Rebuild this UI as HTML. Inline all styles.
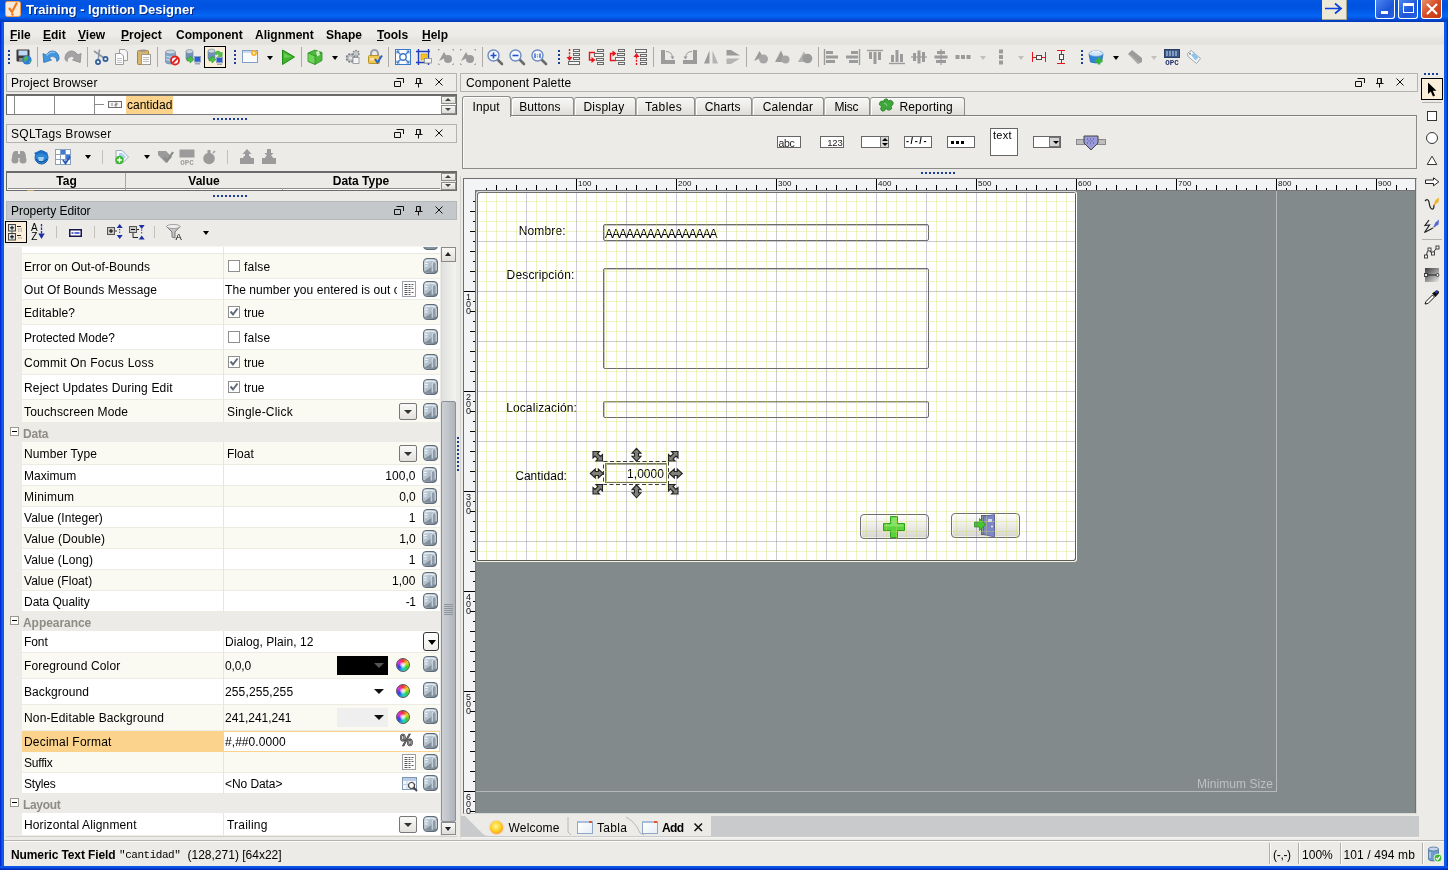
<!DOCTYPE html>
<html><head><meta charset="utf-8"><title>Training - Ignition Designer</title>
<style>
*{box-sizing:border-box;margin:0;padding:0}
html,body{width:1448px;height:870px;overflow:hidden}
body{position:relative;background:#ECEBE7;font-family:"Liberation Sans",sans-serif;font-size:12px;color:#000;line-height:1}
#w{position:absolute;left:0;top:0;width:1448px;height:870px;will-change:transform}
.a{position:absolute}
svg{position:absolute;overflow:visible}
.t{position:absolute;white-space:nowrap;line-height:14px;height:14px}
.b{font-weight:bold}
u{text-decoration:underline;text-underline-offset:1px}
#title{left:0;top:0;width:1448px;height:22px;background:linear-gradient(#0558E4 0,#0054E1 3px,#0054E2 9px,#035FEE 13px,#0566F4 16px,#0457E6 18px,#0245CE 20px,#0138B6 22px)}
#lb{left:0;top:22px;width:4px;height:848px;background:linear-gradient(90deg,#0019CF 0,#0A4FE2 40%,#0F64F0 75%,#0A52E2 100%)}
#rb{left:1444px;top:22px;width:4px;height:848px;background:linear-gradient(270deg,#0019CF 0,#0A4FE2 40%,#0F64F0 75%,#0A52E2 100%)}
#bb{left:0;top:866px;width:1448px;height:4px;background:linear-gradient(#0A55EA 0,#0A50E2 40%,#0433C8 75%,#001CB0 100%)}
#menu{left:4px;top:22px;width:1440px;height:23px;background:linear-gradient(#EFEEEA 0,#EDECE8 55%,#E3E1DB 90%,#E6E4DF 100%)}
.hdr{position:absolute;height:18px;border:1px solid #B4B3AF;background:#EEEDEA}
.hdr.act{background:#C4C8CB;border-color:#B5B8BB}
.sep{position:absolute;width:1px;background:#ADABA4;top:47px;height:20px}
.grip{position:absolute;width:2px;height:2px;background:#1C3D94;box-shadow:0 4px 0 #1C3D94,0 8px 0 #1C3D94,0 12px 0 #1C3D94}
.dd{position:absolute;width:0;height:0;border-left:3.5px solid transparent;border-right:3.5px solid transparent;border-top:4px solid #000;margin-left:0.5px}
.hdots{position:absolute;height:2px;width:34px;background:repeating-linear-gradient(90deg,#1C3D94 0,#1C3D94 2px,transparent 2px,transparent 4px)}
</style></head><body><div id="w">
<svg width="0" height="0" style="left:0;top:0"><defs><linearGradient id="dbg" x1="0" y1="0" x2="1" y2="0.800"><stop offset="0" stop-color="#D3DEE7"/><stop offset="0.450" stop-color="#B3C2CE"/><stop offset="0.700" stop-color="#94A3B0"/><stop offset="1" stop-color="#70808E"/></linearGradient></defs></svg>
<div class="a" id="title"></div>
<div class="a" id="lb"></div><div class="a" id="rb"></div><div class="a" id="bb"></div>
<div class="a" id="menu"></div>
<!-- title contents -->
<svg style="left:5px;top:1px" width="18" height="17" viewBox="0 0 18 17"><rect x="0.5" y="0.5" width="15" height="15" rx="2" fill="#FBE9D8" stroke="#F29A4E"/><path d="M4 7 L7 11 L12 1.5" fill="none" stroke="#F07A1E" stroke-width="2.2"/><circle cx="7.5" cy="13.5" r="1.2" fill="#F07A1E"/></svg>
<div class="t b" id="ttl" style="left:26px;top:2px;font-size:13px;line-height:16px;height:16px;color:#fff;text-shadow:1px 1px 0 #0A2A80">Training - Ignition Designer</div>
<div class="a" style="left:1322px;top:0;width:25px;height:20px;background:#ECE9D8;border-right:1px solid #A9A68F;border-bottom:1px solid #A9A68F"></div>
<svg style="left:1324px;top:2px" width="20" height="14" viewBox="0 0 20 14"><path d="M1 6.5 H17 M11 1.5 L17 6.5 L11 11.5" fill="none" stroke="#0A3FE0" stroke-width="1.700"/></svg>
<div class="a" style="left:1375px;top:0;width:20px;height:19px;border:1px solid #fff;border-top:0;border-radius:0 0 3px 3px;background:linear-gradient(135deg,#4C86F0,#1D55D8 60%,#2A62E0)"></div>
<div class="a" style="left:1381px;top:11px;width:7px;height:3px;background:#fff"></div>
<div class="a" style="left:1398px;top:0;width:20px;height:19px;border:1px solid #fff;border-top:0;border-radius:0 0 3px 3px;background:linear-gradient(135deg,#4C86F0,#1D55D8 60%,#2A62E0)"></div>
<div class="a" style="left:1403px;top:3px;width:11px;height:10px;border:1px solid #fff;border-top:3px solid #fff"></div>
<div class="a" style="left:1421px;top:0;width:21px;height:19px;border:1px solid #fff;border-top:0;border-radius:0 0 3px 3px;background:linear-gradient(135deg,#E8906E,#D64A22 50%,#C23A12)"></div>
<svg style="left:1425px;top:2px" width="14" height="14" viewBox="0 0 14 14"><path d="M2 2 L12 12 M12 2 L2 12" stroke="#fff" stroke-width="2.2"/></svg>
<!-- menu items -->
<div class="t b" style="left:10px;top:28px"><u>F</u>ile</div>
<div class="t b" style="left:43px;top:28px"><u>E</u>dit</div>
<div class="t b" style="left:78px;top:28px"><u>V</u>iew</div>
<div class="t b" style="left:121px;top:28px"><u>P</u>roject</div>
<div class="t b" style="left:176px;top:28px">Component</div>
<div class="t b" style="left:255px;top:28px">Alignment</div>
<div class="t b" style="left:326px;top:28px">Shape</div>
<div class="t b" style="left:377px;top:28px"><u>T</u>ools</div>
<div class="t b" style="left:422px;top:28px"><u>H</u>elp</div>
<!-- toolbar -->
<div class="grip" style="left:8px;top:50px"></div>
<svg style="left:16px;top:49px" width="16" height="16" viewBox="0 0 16 16"><rect x="0.5" y="0.5" width="13" height="12" rx="1" fill="#3B3B3D"/><rect x="2.5" y="1.5" width="9" height="5" fill="#BFD9F5"/><rect x="3" y="9" width="5" height="3.5" fill="#8A8A8A"/><circle cx="11" cy="11" r="4.6" fill="#2F7BD6"/><path d="M8 9 q2-3 4-1 q1 2-1 3 q-2 1-1 3 q-2-1-2-5z M13 12 q2-1 2 1 q-1 2-2 1z" fill="#4CB848"/></svg>
<div class="sep" style="left:37px"></div>
<svg style="left:43px;top:49px" width="16" height="16" viewBox="0 0 16 16"><path d="M0 4.500 L0.800 13.500 L8.500 11 L6 8.800 Q9.500 6 12.500 8.500 Q14 10 13.800 12.500 L16 10.500 Q16.500 5 12 2.500 Q7 0.500 3 6Z" fill="#3F95DE" stroke="#2A6FB4" stroke-width="0.800"/><path d="M3.500 6.500 Q7.500 2 12 3.500" stroke="#8CC4F0" stroke-width="1.200" fill="none"/></svg>
<svg style="left:64.5px;top:49px" width="16" height="16" viewBox="0 0 16 16"><path d="M16 4.500 L15.200 13.500 L7.500 11 L10 8.800 Q6.500 6 3.500 8.500 Q2 10 2.200 12.500 L0 10.500 Q-0.500 5 4 2.500 Q9 0.500 13 6Z" fill="#A4A4A4" stroke="#8C8C8C" stroke-width="0.800"/></svg>
<div class="sep" style="left:86.5px"></div>
<svg style="left:92.5px;top:49px" width="16" height="16" viewBox="0 0 16 16"><path d="M1 2 L11 9 M6.500 0.500 L5.200 11" stroke="#8C98A6" stroke-width="1.600" fill="none"/><circle cx="5" cy="13" r="2.100" fill="none" stroke="#2E5C9E" stroke-width="1.700"/><circle cx="12.500" cy="10" r="2.100" fill="none" stroke="#2E5C9E" stroke-width="1.700"/></svg>
<svg style="left:114px;top:49px" width="16" height="16" viewBox="0 0 16 16"><path d="M5.5 0.5 H11 L13.5 3 V11.5 H5.5Z" fill="#F7F7F7" stroke="#9C9C9C"/><path d="M1.5 4.5 H7 L9.5 7 V15.5 H1.5Z" fill="#FCFCFC" stroke="#9C9C9C"/><path d="M3 9.5H8M3 11.5H8M3 13.5H8" stroke="#C4C4C4"/></svg>
<svg style="left:135.5px;top:49px" width="16" height="16" viewBox="0 0 16 16"><rect x="1.5" y="1.5" width="11" height="14" rx="1" fill="#D8B56C" stroke="#A8843C"/><rect x="4.500" y="0.5" width="5" height="2.5" fill="#9A9A9A"/><rect x="5.5" y="5.5" width="9" height="10" fill="#FBFBFB" stroke="#9C9C9C"/><path d="M7 8.5H13M7 10.5H13M7 12.5H13" stroke="#BDBDBD"/></svg>
<div class="sep" style="left:157px"></div>
<svg style="left:164px;top:49px" width="16" height="16" viewBox="0 0 16 16"><path d="M1.5 3 v10 a5.0 2 0 0 0 10 0 v-10z" fill="#7FA6CF" stroke="#6E7F90" stroke-width="0.6"/><ellipse cx="6.5" cy="3" rx="5.0" ry="2" fill="#C9D6E2" stroke="#6E7F90" stroke-width="0.6"/><path d="M2 7 a5 2 0 0 0 9 0 M2 10 a5 2 0 0 0 9 0" stroke="#DDE8F2" fill="none"/><circle cx="11" cy="11.5" r="4" fill="#fff" stroke="#E0201A" stroke-width="1.8"/><path d="M8.5 14 L13.5 9" stroke="#E0201A" stroke-width="1.8"/></svg>
<svg style="left:185px;top:49px" width="16" height="16" viewBox="0 0 16 16"><path d="M1 2.5 v7 a3.5 2 0 0 0 7 0 v-7z" fill="#6D93BC" stroke="#6E7F90" stroke-width="0.6"/><ellipse cx="4.5" cy="2.5" rx="3.5" ry="2" fill="#C9D6E2" stroke="#6E7F90" stroke-width="0.6"/><path d="M2 9 v3 h3 v2 l4-3.5 l-4-3.5 v2z" fill="#4FC04A" stroke="#2E9A2E" stroke-width="0.6"/><rect x="9.5" y="7.5" width="6" height="5.5" fill="#2C5CD8" stroke="#8FA2C0"/><rect x="10" y="14" width="5" height="1.5" fill="#9AA6B6"/></svg>
<div class="a" style="left:204px;top:46px;width:22px;height:22px;background:#FBEFD9;border:1px solid #000"></div>
<svg style="left:207px;top:49px" width="16" height="16" viewBox="0 0 16 16"><path d="M1 2 v7 a3.5 2 0 0 0 7 0 v-7z" fill="#6D93BC" stroke="#6E7F90" stroke-width="0.6"/><ellipse cx="4.5" cy="2" rx="3.5" ry="2" fill="#C9D6E2" stroke="#6E7F90" stroke-width="0.6"/><path d="M8 4 q3-4 6 0 l1.200-1 v4.500 h-4.500 l1.500-1.500 q-1.500-2-3 0z" fill="#4FC04A" stroke="#2E9A2E" stroke-width="0.5"/><path d="M2 9 v3 h3 v2 l4-3.500 l-4-3.500 v2z" fill="#4FC04A" stroke="#2E9A2E" stroke-width="0.6"/><rect x="9.5" y="8.500" width="6" height="5" fill="#2C5CD8" stroke="#8FA2C0"/><rect x="10" y="14.500" width="5" height="1.500" fill="#9AA6B6"/></svg>
<div class="grip" style="left:234px;top:50px"></div>
<svg style="left:242px;top:49px" width="16" height="16" viewBox="0 0 16 16"><rect x="0.5" y="1.500" width="15" height="12" fill="#FAFBFD" stroke="#7F9DC6"/><rect x="1" y="2" width="14" height="2" fill="#C9DAF0"/><circle cx="12" cy="4" r="3" fill="#F9B233"/><circle cx="12" cy="4" r="1.200" fill="#FDE9A8"/></svg>
<div class="dd" style="left:266px;top:56px"></div>
<svg style="left:280px;top:49px" width="16" height="16" viewBox="0 0 16 16"><path d="M2.500 1 L14.500 8 L2.500 15.500Z" fill="#41B52C" stroke="#1F8A14" stroke-width="1" stroke-linejoin="round"/><path d="M4 4 L11 8 L4 9Z" fill="#7BD86A" opacity="0.7"/></svg>
<div class="sep" style="left:301px"></div>
<svg style="left:307px;top:49px" width="16" height="16" viewBox="0 0 16 16"><path d="M1 4 L8 1 L15 3.500 L15 11.500 L8 15.500 L1 12.500Z" fill="#4DBA3C" stroke="#2B8A22" stroke-width="0.8"/><path d="M1 4 L8 7 L15 3.500 M8 7 V15.500" stroke="#2B8A22" stroke-width="0.8" fill="none"/><path d="M1.500 4.500 L7.500 7.200 V14.500 L1.500 12Z" fill="#6FD45C"/><path d="M9 3 L12 1.500 L13 6 L10 7.500Z" fill="#C8F0BC"/></svg>
<div class="dd" style="left:331px;top:56px"></div>
<svg style="left:345px;top:49px" width="16" height="16" viewBox="0 0 16 16"><circle cx="5.500" cy="9" r="4" fill="#B9BDC2" stroke="#7C8085" stroke-width="1.600" stroke-dasharray="2 1.200"/><circle cx="5.500" cy="9" r="1.500" fill="#ECEBE7"/><circle cx="11" cy="4.500" r="3" fill="#C4C8CC" stroke="#7C8085" stroke-width="1.400" stroke-dasharray="1.600 1"/><rect x="8" y="8.500" width="6" height="6" fill="#F4F4F4" stroke="#8A8E94" stroke-width="0.8"/></svg>
<svg style="left:367px;top:49px" width="16" height="16" viewBox="0 0 16 16"><path d="M4 7 V4.500 a3.500 3.500 0 0 1 7 0 V7" fill="none" stroke="#9AA0A8" stroke-width="2"/><rect x="1.500" y="6.500" width="11" height="8" rx="1" fill="#F0C850" stroke="#B8922A"/><path d="M8 10 L10.500 13.500 L15 6.500" fill="none" stroke="#2C62D0" stroke-width="2"/><rect x="3" y="9" width="4" height="2.500" fill="#F8E6A8"/></svg>
<div class="sep" style="left:388px"></div>
<svg style="left:394.5px;top:49px" width="16" height="16" viewBox="0 0 16 16"><rect x="0.5" y="0.5" width="15" height="15" fill="#FDFDFE" stroke="#3C78C8"/><circle cx="8" cy="8" r="3.200" fill="none" stroke="#3C78C8" stroke-width="1.400"/><path d="M2 2 L5 5 M14 2 L11 5 M2 14 L5 11 M14 14 L11 11" stroke="#3C78C8" stroke-width="1.300"/><path d="M2 2h2.500M2 2v2.500M14 2h-2.500M14 2v2.500M2 14h2.500M2 14v-2.500M14 14h-2.500M14 14v-2.500" stroke="#3C78C8" stroke-width="1"/></svg>
<svg style="left:416px;top:49px" width="16" height="16" viewBox="0 0 16 16"><path d="M0 2.500 H14 M0 13.500 H14 M2.500 0 V16 M12.500 0 V16" stroke="#1F3FC0" stroke-width="1.400" fill="none"/><rect x="5" y="5" width="6" height="6" fill="#F5C21E" stroke="#C79A10" stroke-width="0.6"/><rect x="8.500" y="9.500" width="7" height="4.500" fill="#F2F2F2" stroke="#8A8A8A" stroke-width="0.8"/></svg>
<svg style="left:438px;top:49px" width="16" height="16" viewBox="0 0 16 16"><path d="M1 12 L6 3 L9 8z" fill="#9B9B9B"/><circle cx="10" cy="10" r="4" fill="#9B9B9B"/><path d="M0.500 0.500h2M0.500 0.500v2M15.500 0.500h-2M15.500 0.500v2M0.500 15.500h2M0.500 15.500v-2M15.500 15.500h-2M15.500 15.500v-2" stroke="#8A8A8A" stroke-width="1" stroke-dasharray="1 1"/></svg>
<svg style="left:460px;top:49px" width="16" height="16" viewBox="0 0 16 16"><path d="M1 12 L6 3 L9 8z" fill="#9B9B9B"/><circle cx="10" cy="10" r="4" fill="#9B9B9B"/><path d="M0.500 0.500h2M0.500 0.500v2M15.500 0.500h-2M15.500 0.500v2M0.500 15.500h2M0.500 15.500v-2M15.500 15.500h-2M15.500 15.500v-2" stroke="#8A8A8A" stroke-width="1" stroke-dasharray="1 1"/></svg>
<div class="sep" style="left:481.5px"></div>
<svg style="left:487px;top:49px" width="16" height="16" viewBox="0 0 16 16"><path d="M10 10 L15 15" stroke="#6A6A6A" stroke-width="2.600" stroke-linecap="round"/><circle cx="6.500" cy="6.500" r="5.500" fill="#F4F8FE" stroke="#6C8CC4" stroke-width="1.400"/><path d="M3.500 6.500H9.500M6.500 3.500V9.500" stroke="#2450C8" stroke-width="1.600"/></svg>
<svg style="left:508.5px;top:49px" width="16" height="16" viewBox="0 0 16 16"><path d="M10 10 L15 15" stroke="#6A6A6A" stroke-width="2.600" stroke-linecap="round"/><circle cx="6.500" cy="6.500" r="5.500" fill="#F4F8FE" stroke="#6C8CC4" stroke-width="1.400"/><path d="M3.500 6.500H9.500" stroke="#2450C8" stroke-width="1.600"/></svg>
<svg style="left:530.5px;top:49px" width="16" height="16" viewBox="0 0 16 16"><path d="M10 10 L15 15" stroke="#6A6A6A" stroke-width="2.600" stroke-linecap="round"/><circle cx="6.500" cy="6.500" r="5.500" fill="#F4F8FE" stroke="#6C8CC4" stroke-width="1.400"/><path d="M4 4.500V9M9 4.500V9M6.500 5.500v0.800M6.500 7.500v0.800" stroke="#2450C8" stroke-width="1.300"/></svg>
<div class="grip" style="left:558px;top:50px"></div>
<svg style="left:566px;top:49px" width="16" height="16" viewBox="0 0 16 16"><path d="M3.500 0 V9" stroke="#E8141C" stroke-width="1.400" stroke-dasharray="2 1.200"/><path d="M0.500 8 h6 l-3 4z" fill="#E8141C"/><rect x="7.5" y="0.5" width="6" height="2" fill="#F4F4F4" stroke="#6A6A6A" stroke-width="1"/><rect x="7.5" y="4.5" width="6" height="2" fill="#F4F4F4" stroke="#6A6A6A" stroke-width="1"/><rect x="7.5" y="8.5" width="6" height="2" fill="#F4F4F4" stroke="#6A6A6A" stroke-width="1"/><rect x="2.5" y="12.5" width="11" height="3" fill="#F4F4F4" stroke="#6A6A6A" stroke-width="1"/></svg>
<svg style="left:587.5px;top:49px" width="16" height="16" viewBox="0 0 16 16"><path d="M7 3.500 H1.500 V11 H4" stroke="#E8141C" stroke-width="1.400" fill="none"/><path d="M3.500 8 l4 3 l-4 3z" fill="#E8141C"/><rect x="9.5" y="0.5" width="6" height="2" fill="#F4F4F4" stroke="#6A6A6A" stroke-width="1"/><rect x="6.5" y="4.5" width="9" height="3" fill="#F4F4F4" stroke="#6A6A6A" stroke-width="1"/><rect x="8.5" y="9.5" width="7" height="2" fill="#F4F4F4" stroke="#6A6A6A" stroke-width="1"/><rect x="9.5" y="13.5" width="6" height="2" fill="#F4F4F4" stroke="#6A6A6A" stroke-width="1"/></svg>
<svg style="left:609px;top:49px" width="16" height="16" viewBox="0 0 16 16"><path d="M7 11.500 H1.500 V4.500 H4" stroke="#E8141C" stroke-width="1.400" fill="none"/><path d="M3.500 1.500 l4 3 l-4 3z" fill="#E8141C"/><rect x="9.5" y="0.5" width="6" height="2" fill="#F4F4F4" stroke="#6A6A6A" stroke-width="1"/><rect x="8.5" y="4.5" width="7" height="2" fill="#F4F4F4" stroke="#6A6A6A" stroke-width="1"/><rect x="6.5" y="8.5" width="9" height="3" fill="#F4F4F4" stroke="#6A6A6A" stroke-width="1"/><rect x="9.5" y="13.5" width="6" height="2" fill="#F4F4F4" stroke="#6A6A6A" stroke-width="1"/></svg>
<svg style="left:632.5px;top:49px" width="16" height="16" viewBox="0 0 16 16"><path d="M3.500 16 V7" stroke="#E8141C" stroke-width="1.400" stroke-dasharray="2 1.200"/><path d="M0.500 8 h6 l-3 -4z" fill="#E8141C"/><rect x="2.5" y="0.5" width="11" height="3" fill="#F4F4F4" stroke="#6A6A6A" stroke-width="1"/><rect x="7.5" y="5.5" width="6" height="2" fill="#F4F4F4" stroke="#6A6A6A" stroke-width="1"/><rect x="7.5" y="9.5" width="6" height="2" fill="#F4F4F4" stroke="#6A6A6A" stroke-width="1"/><rect x="7.5" y="13.5" width="6" height="2" fill="#F4F4F4" stroke="#6A6A6A" stroke-width="1"/></svg>
<div class="sep" style="left:653px"></div>
<svg style="left:659.5px;top:49px" width="16" height="16" viewBox="0 0 16 16"><path d="M1 1 h4 v10 h10 v4 h-14z" fill="#9B9B9B"/><path d="M6 2.500 q6 0 6.500 6" stroke="#9B9B9B" stroke-width="1" fill="none"/><path d="M10.500 7.500 l2 3 l2-3z" fill="#9B9B9B"/></svg>
<svg style="left:681.5px;top:49px" width="16" height="16" viewBox="0 0 16 16"><path d="M15 1 h-4 v10 h-10 v4 h14z" fill="#9B9B9B"/><path d="M10 2.500 q-6 0-6.500 6" stroke="#9B9B9B" stroke-width="1" fill="none"/><path d="M1.500 7.500 l2 3 l2-3z" fill="#9B9B9B"/></svg>
<svg style="left:703px;top:49px" width="16" height="16" viewBox="0 0 16 16"><path d="M6.500 1.500 V14.500 H1z" fill="#9B9B9B"/><path d="M9.500 1.500 V14.500 H15z" fill="#B4B4B4"/></svg>
<svg style="left:725px;top:49px" width="16" height="16" viewBox="0 0 16 16"><path d="M1.500 1 H6 L15 6.500 H1.500z" fill="#9B9B9B"/><path d="M1.500 9.500 H15 L6 15 H1.500z" fill="#B4B4B4"/></svg>
<div class="sep" style="left:746px"></div>
<svg style="left:752.5px;top:49px" width="16" height="16" viewBox="0 0 16 16"><path d="M1 12 L6.500 2 L10 8z" fill="#9B9B9B"/><circle cx="10.500" cy="10" r="4.500" fill="#A6A6A6"/></svg>
<svg style="left:774px;top:49px" width="16" height="16" viewBox="0 0 16 16"><path d="M1 13 L7 1.500 L12 13z" fill="#9B9B9B"/><circle cx="11.500" cy="10.500" r="4" fill="#A6A6A6"/></svg>
<svg style="left:796.5px;top:49px" width="16" height="16" viewBox="0 0 16 16"><path d="M1 13 L7 2.500 L12 13z" fill="#B0B0B0"/><circle cx="10.500" cy="9.500" r="4.800" fill="#9B9B9B"/></svg>
<div class="sep" style="left:817.5px"></div>
<svg style="left:823px;top:49px" width="16" height="16" viewBox="0 0 16 16"><path d="M1.500 0V16" stroke="#9B9B9B" stroke-width="1.400"/><rect x="3" y="2" width="7" height="3" fill="#9B9B9B"/><rect x="3" y="6.500" width="12" height="3" fill="#9B9B9B"/><rect x="3" y="11" width="9" height="3" fill="#9B9B9B"/></svg>
<svg style="left:845px;top:49px" width="16" height="16" viewBox="0 0 16 16"><path d="M14.500 0V16" stroke="#9B9B9B" stroke-width="1.400"/><rect x="6" y="2" width="7" height="3" fill="#9B9B9B"/><rect x="1" y="6.500" width="12" height="3" fill="#9B9B9B"/><rect x="4" y="11" width="9" height="3" fill="#9B9B9B"/></svg>
<svg style="left:867px;top:49px" width="16" height="16" viewBox="0 0 16 16"><path d="M0 1.500H16" stroke="#9B9B9B" stroke-width="1.400"/><rect x="2" y="3" width="3" height="7" fill="#9B9B9B"/><rect x="6.500" y="3" width="3" height="12" fill="#9B9B9B"/><rect x="11" y="3" width="3" height="8" fill="#9B9B9B"/></svg>
<svg style="left:889px;top:49px" width="16" height="16" viewBox="0 0 16 16"><path d="M0 14.500H16" stroke="#9B9B9B" stroke-width="1.400"/><rect x="2" y="6" width="3" height="7" fill="#9B9B9B"/><rect x="6.500" y="1" width="3" height="12" fill="#9B9B9B"/><rect x="11" y="5" width="3" height="8" fill="#9B9B9B"/></svg>
<svg style="left:910.5px;top:49px" width="16" height="16" viewBox="0 0 16 16"><path d="M0 8H16" stroke="#9B9B9B" stroke-width="1.200"/><rect x="2" y="4" width="3" height="8" fill="#9B9B9B"/><rect x="6.500" y="1.500" width="3" height="13" fill="#9B9B9B"/><rect x="11" y="3" width="3" height="10" fill="#9B9B9B"/></svg>
<svg style="left:932.5px;top:49px" width="16" height="16" viewBox="0 0 16 16"><path d="M8 0V16" stroke="#9B9B9B" stroke-width="1.200"/><rect x="4" y="2" width="8" height="3" fill="#9B9B9B"/><rect x="1.500" y="6.500" width="13" height="3" fill="#9B9B9B"/><rect x="3" y="11" width="10" height="3" fill="#9B9B9B"/></svg>
<svg style="left:955px;top:49px" width="16" height="16" viewBox="0 0 16 16"><rect x="0.500" y="6" width="4" height="4" fill="#9B9B9B"/><rect x="6" y="6" width="4" height="4" fill="#9B9B9B"/><rect x="11.500" y="6" width="4" height="4" fill="#9B9B9B"/></svg>
<div class="dd" style="left:979px;top:56px;border-top-color:#C2C0BA"></div>
<svg style="left:993px;top:49px" width="16" height="16" viewBox="0 0 16 16"><rect x="6" y="0.500" width="4" height="4" fill="#9B9B9B"/><rect x="6" y="6" width="4" height="4" fill="#9B9B9B"/><rect x="6" y="11.500" width="4" height="4" fill="#9B9B9B"/></svg>
<div class="dd" style="left:1017.5px;top:56px;border-top-color:#C2C0BA"></div>
<svg style="left:1031px;top:49px" width="16" height="16" viewBox="0 0 16 16"><path d="M1.500 3V13M14.500 3V13M1 8.500H15" stroke="#E8141C" stroke-width="1"/><rect x="5.500" y="6.500" width="5" height="4" fill="#F7F7F7" stroke="#4A4A4A"/></svg>
<svg style="left:1053px;top:49px" width="16" height="16" viewBox="0 0 16 16"><path d="M4 1.500H12M4 14.500H12M8.500 1V15" stroke="#E8141C" stroke-width="1"/><rect x="6.500" y="5.500" width="4" height="5" fill="#F7F7F7" stroke="#4A4A4A"/></svg>
<div class="grip" style="left:1081px;top:50px"></div>
<svg style="left:1088px;top:49px" width="16" height="16" viewBox="0 0 16 16"><path d="M1 5 h14 l-1.500 8 q-5.500 2-11 0z" fill="#2F86D8" stroke="#1E62A8" stroke-width="0.700"/><ellipse cx="8" cy="4.500" rx="7" ry="2.800" fill="#CFE4F6" stroke="#7FA8D0" stroke-width="0.700"/><path d="M4 3.500 l2-1.500 l2 1.500 l2-1.500 l2 1.500" stroke="#fff" fill="none"/><path d="M11 8.500v7M7.500 12h7" stroke="#3CB62E" stroke-width="2.600"/></svg>
<div class="dd" style="left:1112.5px;top:56px"></div>
<svg style="left:1126.5px;top:49px" width="16" height="16" viewBox="0 0 16 16"><path d="M1 5 L5 1 L15 9 L15 13 L11 15 Z" fill="#9B9B9B"/><path d="M3 6 L12 14" stroke="#B8B8B8"/></svg>
<div class="dd" style="left:1150px;top:56px;border-top-color:#C2C0BA"></div>
<svg style="left:1164px;top:49px" width="16" height="16" viewBox="0 0 16 16"><rect x="0.500" y="0.500" width="15" height="8" fill="#3C5A86" stroke="#27406A"/><path d="M3 2v5M6 2v5M9 2v5M12 2v5" stroke="#9FB6D6" stroke-width="1.400"/><text x="8" y="15.500" font-family="Liberation Mono,monospace" font-weight="bold" font-size="7.500" text-anchor="middle" fill="#1F2F6A">OPC</text></svg>
<svg style="left:1185.5px;top:49px" width="16" height="16" viewBox="0 0 16 16"><path d="M1.500 4.500 L5 1.500 L14.500 9.500 L10.500 14.500 L2 7.500Z" fill="#F6F8FA" stroke="#9AA4AE" stroke-width="1"/><path d="M5 6 L8 4 L12.500 8.500 L9.500 11.500Z" fill="#8CC4EC"/><circle cx="4" cy="4.800" r="1" fill="#8A8A8A"/></svg>
<div class="hdr" style="left:6px;top:73px;width:451px;height:19px"></div>
<div class="t" style="letter-spacing:0.120px;left:11px;top:76px">Project Browser</div>
<svg style="left:394px;top:78px" width="50" height="10" viewBox="0 0 50 10"><path d="M2.500 0.500 H9.500 V5 M0.500 3.500 H6.500 V8.500 H0.500Z M22.500 0.500 H26.500 V5.500 H22.500Z M26 0.500V5.500 M21 5.500 H28.500 M24.500 5.500 V9.500 M41.500 0.500 L48.500 7.500 M48.500 0.500 L41.500 7.500" fill="none" stroke="#111" stroke-width="1"/></svg>
<div class="a" style="left:6px;top:94px;width:451px;height:21px;background:#fff;border:1px solid #6A6A6A;border-top:2px solid #6A6A6A;border-bottom-color:#7A7A7A"></div>
<div class="a" style="left:14px;top:96px;width:1px;height:18px;background:#8A8A8A"></div>
<div class="a" style="left:54px;top:96px;width:1px;height:18px;background:#8A8A8A"></div>
<div class="a" style="left:94px;top:96px;width:1px;height:18px;background:#8A8A8A"></div>
<div class="a" style="left:94px;top:104px;width:10px;height:1px;background:#8A8A8A"></div>
<svg style="left:108px;top:101px" width="14" height="8" viewBox="0 0 14 8"><rect x="0.500" y="0.500" width="13" height="6" fill="#F4F4F4" stroke="#6E6E6E"/><path d="M4 2v3M7 2h2v1.500h-2v1.500h2" stroke="#6E6E6E" stroke-width="0.800" fill="none"/></svg>
<div class="a" style="left:126px;top:96px;width:47px;height:18px;background:#FBD38C"></div>
<div class="t" style="left:127px;top:98px">cantidad</div>
<div class="a" style="left:441px;top:96px;width:15px;height:8px;background:linear-gradient(#F4F4F2,#DEDDD9);border:1px solid #8E8E8C"></div>
<div class="dd" style="left:444.5px;top:98px;border-top:0;border-bottom:3.500px solid #444"></div>
<div class="a" style="left:441px;top:105px;width:15px;height:9px;background:linear-gradient(#F4F4F2,#DEDDD9);border:1px solid #8E8E8C"></div>
<div class="dd" style="left:444.5px;top:107.5px;border-top:3.500px solid #444"></div>
<div class="hdots" style="left:213px;top:118px"></div>
<div class="hdr" style="left:6px;top:124px;width:451px;height:19px"></div>
<div class="t" style="letter-spacing:0.319px;left:11px;top:127px">SQLTags Browser</div>
<svg style="left:394px;top:129px" width="50" height="10" viewBox="0 0 50 10"><path d="M2.500 0.500 H9.500 V5 M0.500 3.500 H6.500 V8.500 H0.500Z M22.500 0.500 H26.500 V5.500 H22.500Z M26 0.500V5.500 M21 5.500 H28.500 M24.500 5.500 V9.500 M41.500 0.500 L48.500 7.500 M48.500 0.500 L41.500 7.500" fill="none" stroke="#111" stroke-width="1"/></svg>
<svg style="left:11px;top:149px" width="16" height="16" viewBox="0 0 16 16"><path d="M1 9 Q1 3 4 2 H7 V9Z M15 9 Q15 3 12 2 H9 V9Z" fill="#9B9B9B"/><circle cx="4" cy="11" r="3.500" fill="#9B9B9B"/><circle cx="12" cy="11" r="3.500" fill="#9B9B9B"/><rect x="6" y="5" width="4" height="4" fill="#9B9B9B"/></svg>
<svg style="left:33px;top:149px" width="16" height="16" viewBox="0 0 16 16"><circle cx="8.500" cy="8.500" r="6.500" fill="#2E86D4" stroke="#1B5FA8"/><path d="M1 4 L8 1 L15 4 L13 6 L8 4 L3 6Z" fill="#1B6EC4"/><path d="M5 8 h6 l-1 4 h-4z" fill="#9FD0F4"/><path d="M3 10 q5 6 11 0" stroke="#0F4A8C" fill="none"/></svg>
<svg style="left:55px;top:149px" width="16" height="16" viewBox="0 0 16 16"><rect x="0.500" y="0.500" width="15" height="15" fill="#fff" stroke="#8AA0C0"/><path d="M5.500 0V16M10.500 0V16M0 5.500H16M0 10.500H16" stroke="#8AA0C0"/><rect x="6" y="1" width="4" height="4" fill="#3C7CD8"/><rect x="11" y="6" width="4" height="4" fill="#3C7CD8"/><path d="M8 11 l2.500 3.500 l4.500-7" stroke="#2458B8" stroke-width="1.800" fill="none"/></svg>
<div class="dd" style="left:84px;top:155px"></div>
<div class="a" style="left:102px;top:150px;width:1px;height:14px;background:#C2C0BA"></div>
<svg style="left:114px;top:149px" width="16" height="16" viewBox="0 0 16 16"><path d="M2 1.500 H8 L14.500 8 L8 14.500 H2Z" fill="#F8FAFC" stroke="#9AA8B8"/><path d="M5 4 H8 L12 8 L8 12 H5Z" fill="#A8D4F4"/><circle cx="5.500" cy="11" r="4.200" fill="#3CB62E"/><path d="M3 11h5M5.500 8.500v5" stroke="#fff" stroke-width="1.500"/></svg>
<div class="dd" style="left:143px;top:155px"></div>
<svg style="left:158px;top:149px" width="16" height="16" viewBox="0 0 16 16"><path d="M0 2 H8 L14 8 L8 14 L0 6Z" fill="#9B9B9B"/><path d="M6 8 l3 4 l6-9" stroke="#8A8A8A" stroke-width="2.200" fill="none"/></svg>
<svg style="left:179px;top:149px" width="16" height="16" viewBox="0 0 16 16"><rect x="0.500" y="0.500" width="15" height="8" fill="#9B9B9B"/><text x="8" y="15.500" font-family="Liberation Mono,monospace" font-weight="bold" font-size="7.500" text-anchor="middle" fill="#9B9B9B">OPC</text></svg>
<svg style="left:202px;top:149px" width="16" height="16" viewBox="0 0 16 16"><circle cx="7" cy="9.500" r="5.800" fill="#9B9B9B"/><rect x="5.500" y="1" width="3" height="3" fill="#9B9B9B"/><path d="M11 4 l2-2" stroke="#9B9B9B" stroke-width="1.600"/></svg>
<div class="a" style="left:227px;top:150px;width:1px;height:14px;background:#C2C0BA"></div>
<svg style="left:239px;top:149px" width="16" height="16" viewBox="0 0 16 16"><path d="M1 9 h3 l1-2 h6 l1 2 h3 v6 h-14z" fill="#9B9B9B"/><path d="M8 0 L12.500 5 H10 V9 H6 V5 H3.500Z" fill="#9B9B9B"/></svg>
<svg style="left:261px;top:149px" width="16" height="16" viewBox="0 0 16 16"><path d="M1 9 h3 l1-2 h6 l1 2 h3 v6 h-14z" fill="#9B9B9B"/><path d="M8 9 L12.500 4 H10 V0 H6 V4 H3.500Z" fill="#9B9B9B"/></svg>
<div class="a" style="left:6px;top:171px;width:451px;height:20px;background:#ECEBE7;border:1px solid #6A6A6A;border-top:2px solid #6A6A6A"></div>
<div class="a" style="left:8px;top:188px;width:432px;height:1px;background:#8C8C8A"></div>
<div class="a" style="left:8px;top:189px;width:432px;height:1px;background:#fff"></div>
<div class="a" style="left:125px;top:173px;width:1px;height:17px;background:#A8A7A3"></div>
<div class="a" style="left:282px;top:188px;width:1px;height:2px;background:#A8A7A3"></div>
<div class="t b" style="left:8px;top:174px;width:117px;text-align:center">Tag</div>
<div class="t b" style="left:126px;top:174px;width:156px;text-align:center">Value</div>
<div class="t b" style="left:283px;top:174px;width:156px;text-align:center">Data Type</div>
<div class="a" style="left:441px;top:173px;width:15px;height:8px;background:linear-gradient(#F4F4F2,#DEDDD9);border:1px solid #8E8E8C"></div>
<div class="dd" style="left:444.5px;top:175px;border-top:0;border-bottom:3.500px solid #444"></div>
<div class="a" style="left:441px;top:182px;width:15px;height:8px;background:linear-gradient(#F4F4F2,#DEDDD9);border:1px solid #8E8E8C"></div>
<div class="dd" style="left:444.5px;top:184px;border-top:3.500px solid #444"></div>
<div class="hdots" style="left:213px;top:195px"></div>
<div class="a" style="left:27px;top:190px;width:7px;height:1px;background:#C9A24E"></div>
<div class="hdr act" style="left:6px;top:201px;width:451px;height:19px"></div>
<div class="t" style="letter-spacing:-0.030px;left:11px;top:204px">Property Editor</div>
<svg style="left:394px;top:206px" width="50" height="10" viewBox="0 0 50 10"><path d="M2.500 0.500 H9.500 V5 M0.500 3.500 H6.500 V8.500 H0.500Z M22.500 0.500 H26.500 V5.500 H22.500Z M26 0.500V5.500 M21 5.500 H28.500 M24.500 5.500 V9.500 M41.500 0.500 L48.500 7.500 M48.500 0.500 L41.500 7.500" fill="none" stroke="#111" stroke-width="1"/></svg>
<div class="a" style="left:5px;top:221px;width:22px;height:22px;background:#FBEFD9;border:1px solid #000"></div>
<svg style="left:8px;top:224px" width="16" height="17" viewBox="0 0 16 17"><path d="M4 7V10" stroke="#555"/><rect x="0.500" y="0.500" width="7" height="6.500" fill="#E0E0E0" stroke="#444"/><path d="M2 3.800h4M4 1.800v4" stroke="#000"/><rect x="0.500" y="9.500" width="7" height="6.500" fill="#E0E0E0" stroke="#444"/><path d="M2 12.800h4M4 10.800v4" stroke="#000"/><path d="M9 2.500h4M9 11.500h4" stroke="#222" stroke-width="1.200"/><path d="M10 5h4M10 7h4M10 14h4" stroke="#8A8A8A" stroke-dasharray="1.500 1"/></svg>
<svg style="left:31px;top:223px" width="16" height="17" viewBox="0 0 16 17"><text x="0" y="8" font-size="10" font-family="Liberation Sans,sans-serif">A</text><text x="0.300" y="16.500" font-size="10" font-family="Liberation Sans,sans-serif">Z</text><path d="M10.500 1V11" stroke="#1C2FA8" stroke-width="1.300" stroke-dasharray="2.500 1"/><path d="M7.300 10.500 h6.400 l-3.200 5.500z" fill="#1C2FA8"/></svg>
<div class="a" style="left:56px;top:226px;width:1px;height:12px;background:#C2C0BA"></div>
<svg style="left:69px;top:229px" width="13" height="8" viewBox="0 0 13 8"><rect x="0.750" y="0.750" width="11.500" height="6.500" fill="#fff" stroke="#15154F" stroke-width="1.500"/><path d="M2.500 4h2M5.500 4h5" stroke="#2A3FC8" stroke-width="1.400"/></svg>
<div class="a" style="left:94px;top:226px;width:1px;height:12px;background:#C2C0BA"></div>
<svg style="left:107px;top:224px" width="16" height="16" viewBox="0 0 16 16"><rect x="0.500" y="3.500" width="7" height="7" fill="#C8C8C8" stroke="#555"/><path d="M2 7h4M4 5v4" stroke="#000"/><path d="M8 7h2" stroke="#333"/><path d="M9.700 4 h6 l-3-4z M9.700 11 h6 l-3 4z" fill="#1C2FA8"/><path d="M12.700 5v5" stroke="#1C2FA8" stroke-dasharray="1.300 1.300"/></svg>
<svg style="left:129px;top:224px" width="16" height="16" viewBox="0 0 16 16"><rect x="0.500" y="2.500" width="7" height="6" fill="#C8C8C8" stroke="#555"/><path d="M2 5.500h4" stroke="#000"/><path d="M4 9 V13.500 H9 M8 5.500h2" stroke="#222" fill="none"/><path d="M9.700 1 h6 l-3 4z M9.700 15.500 h6 l-3-4z" fill="#1C2FA8"/><path d="M12.700 5.500v5" stroke="#1C2FA8" stroke-dasharray="1.300 1.300"/></svg>
<div class="a" style="left:154px;top:226px;width:1px;height:12px;background:#C2C0BA"></div>
<svg style="left:166px;top:224px" width="17" height="16" viewBox="0 0 17 16"><path d="M0.500 2.500 L6 8 V13 L9 14 V8 L14 2.500Z" fill="#C4C4C4" stroke="#7A7A7A"/><ellipse cx="7.300" cy="2.500" rx="6.800" ry="2" fill="#F0F0F0" stroke="#8A8A8A" stroke-width="0.800"/><text x="9.500" y="15.500" font-size="9.500" font-family="Liberation Sans,sans-serif">A</text></svg>
<div class="dd" style="left:202px;top:231px"></div>
<div class="a" style="left:6px;top:246px;width:435px;height:590px;background:#ECEBE7;border-top:1px solid #F6F5F2"></div>
<div class="a" style="left:22px;top:247px;width:418px;height:7px;background:#fff;border-bottom:1px solid #E9E8E2"></div>
<div class="a" style="left:223px;top:247px;width:1px;height:7px;background:#E6E5E0"></div>
<div class="a" style="left:423px;top:247px;width:15px;height:3px;overflow:hidden"><svg style="left:0;top:-13px" width="15" height="16" viewBox="0 0 15 16"><rect x="0.500" y="0.500" width="14" height="15" rx="3.500" fill="#8492A0" stroke="#5F6B77"/></svg></div>
<div class="a" style="left:22px;top:254px;width:418px;height:25px;background:#FBFAF2;border-bottom:1px solid #ECEBE4"></div>
<div class="a" style="left:223px;top:254px;width:1px;height:25px;background:#E6E5E0"></div>
<div class="t" style="letter-spacing:0.058px;left:24px;top:260px">Error on Out-of-Bounds</div>
<div class="a" style="left:228px;top:260px;width:12px;height:12px;background:#fff;border:1px solid #8E8F8F"></div>
<div class="t" style="letter-spacing:0.188px;left:244px;top:260px">false</div>
<svg style="left:423px;top:258px" width="15" height="16" viewBox="0 0 15 16"><rect x="0.500" y="0.500" width="14" height="15" rx="3.500" fill="url(#dbg)" stroke="#5F6B77"/><path d="M1.200 13 L8 8.200 L9 8.200 V14.600 H3.500 Q1.200 14.600 1.200 13Z" fill="#7C8A97" opacity="0.850"/><path d="M2 12.800 L8.200 8.400" stroke="#C9D4DC" stroke-width="0.900" fill="none"/><path d="M2 3 Q7.500 1.200 13 3" stroke="#EDF2F6" stroke-width="1" fill="none"/><path d="M1.800 5.500h3M1.800 8h3" stroke="#F2F6F9" stroke-width="1"/><path d="M9.200 13.500 V6 q0-2.300 2-2.300 q2 0 2 2.300 V12.500" stroke="#DDE6ED" stroke-width="1" fill="#8E9CA9"/></svg>
<div class="a" style="left:22px;top:279px;width:418px;height:21px;background:#fff;border-bottom:1px solid #ECEBE4"></div>
<div class="a" style="left:223px;top:279px;width:1px;height:21px;background:#E6E5E0"></div>
<div class="t" style="letter-spacing:0.081px;left:24px;top:283px">Out Of Bounds Message</div>
<div class="t" style="letter-spacing:0.067px;left:225px;top:283px;width:172px;overflow:hidden">The number you entered is out o</div>
<svg style="left:402px;top:281px" width="14" height="16" viewBox="0 0 14 16"><rect x="0.500" y="0.500" width="13" height="15" fill="#FDFDFD" stroke="#9AA0A6"/><path d="M2.500 3.500h9M2.500 5.500h8M2.500 7.500h9M2.500 9.500h6M2.500 11.500h9M2.500 13.500h7" stroke="#5A5A5A" stroke-dasharray="3 1 2 1"/></svg>
<svg style="left:423px;top:281px" width="15" height="16" viewBox="0 0 15 16"><rect x="0.500" y="0.500" width="14" height="15" rx="3.500" fill="url(#dbg)" stroke="#5F6B77"/><path d="M1.200 13 L8 8.200 L9 8.200 V14.600 H3.500 Q1.200 14.600 1.200 13Z" fill="#7C8A97" opacity="0.850"/><path d="M2 12.800 L8.200 8.400" stroke="#C9D4DC" stroke-width="0.900" fill="none"/><path d="M2 3 Q7.500 1.200 13 3" stroke="#EDF2F6" stroke-width="1" fill="none"/><path d="M1.800 5.500h3M1.800 8h3" stroke="#F2F6F9" stroke-width="1"/><path d="M9.200 13.500 V6 q0-2.300 2-2.300 q2 0 2 2.300 V12.500" stroke="#DDE6ED" stroke-width="1" fill="#8E9CA9"/></svg>
<div class="a" style="left:22px;top:300px;width:418px;height:25px;background:#FBFAF2;border-bottom:1px solid #ECEBE4"></div>
<div class="a" style="left:223px;top:300px;width:1px;height:25px;background:#E6E5E0"></div>
<div class="t" style="letter-spacing:0.106px;left:24px;top:306px">Editable?</div>
<div class="a" style="left:228px;top:306px;width:12px;height:12px;background:#fff;border:1px solid #8E8F8F"></div>
<svg style="left:229px;top:307px" width="10" height="10" viewBox="0 0 10 10"><path d="M1.500 4.500 L4 7.500 L8.500 1.500" stroke="#5F6B78" stroke-width="2" fill="none"/></svg>
<div class="t" style="letter-spacing:-0.072px;left:244px;top:306px">true</div>
<svg style="left:423px;top:304px" width="15" height="16" viewBox="0 0 15 16"><rect x="0.500" y="0.500" width="14" height="15" rx="3.500" fill="url(#dbg)" stroke="#5F6B77"/><path d="M1.200 13 L8 8.200 L9 8.200 V14.600 H3.500 Q1.200 14.600 1.200 13Z" fill="#7C8A97" opacity="0.850"/><path d="M2 12.800 L8.200 8.400" stroke="#C9D4DC" stroke-width="0.900" fill="none"/><path d="M2 3 Q7.500 1.200 13 3" stroke="#EDF2F6" stroke-width="1" fill="none"/><path d="M1.800 5.500h3M1.800 8h3" stroke="#F2F6F9" stroke-width="1"/><path d="M9.200 13.500 V6 q0-2.300 2-2.300 q2 0 2 2.300 V12.500" stroke="#DDE6ED" stroke-width="1" fill="#8E9CA9"/></svg>
<div class="a" style="left:22px;top:325px;width:418px;height:25px;background:#fff;border-bottom:1px solid #ECEBE4"></div>
<div class="a" style="left:223px;top:325px;width:1px;height:25px;background:#E6E5E0"></div>
<div class="t" style="letter-spacing:-0.033px;left:24px;top:331px">Protected Mode?</div>
<div class="a" style="left:228px;top:331px;width:12px;height:12px;background:#fff;border:1px solid #8E8F8F"></div>
<div class="t" style="letter-spacing:0.188px;left:244px;top:331px">false</div>
<svg style="left:423px;top:329px" width="15" height="16" viewBox="0 0 15 16"><rect x="0.500" y="0.500" width="14" height="15" rx="3.500" fill="url(#dbg)" stroke="#5F6B77"/><path d="M1.200 13 L8 8.200 L9 8.200 V14.600 H3.500 Q1.200 14.600 1.200 13Z" fill="#7C8A97" opacity="0.850"/><path d="M2 12.800 L8.200 8.400" stroke="#C9D4DC" stroke-width="0.900" fill="none"/><path d="M2 3 Q7.500 1.200 13 3" stroke="#EDF2F6" stroke-width="1" fill="none"/><path d="M1.800 5.500h3M1.800 8h3" stroke="#F2F6F9" stroke-width="1"/><path d="M9.200 13.500 V6 q0-2.300 2-2.300 q2 0 2 2.300 V12.500" stroke="#DDE6ED" stroke-width="1" fill="#8E9CA9"/></svg>
<div class="a" style="left:22px;top:350px;width:418px;height:25px;background:#FBFAF2;border-bottom:1px solid #ECEBE4"></div>
<div class="a" style="left:223px;top:350px;width:1px;height:25px;background:#E6E5E0"></div>
<div class="t" style="letter-spacing:0.226px;left:24px;top:356px">Commit On Focus Loss</div>
<div class="a" style="left:228px;top:356px;width:12px;height:12px;background:#fff;border:1px solid #8E8F8F"></div>
<svg style="left:229px;top:357px" width="10" height="10" viewBox="0 0 10 10"><path d="M1.500 4.500 L4 7.500 L8.500 1.500" stroke="#5F6B78" stroke-width="2" fill="none"/></svg>
<div class="t" style="letter-spacing:-0.072px;left:244px;top:356px">true</div>
<svg style="left:423px;top:354px" width="15" height="16" viewBox="0 0 15 16"><rect x="0.500" y="0.500" width="14" height="15" rx="3.500" fill="url(#dbg)" stroke="#5F6B77"/><path d="M1.200 13 L8 8.200 L9 8.200 V14.600 H3.500 Q1.200 14.600 1.200 13Z" fill="#7C8A97" opacity="0.850"/><path d="M2 12.800 L8.200 8.400" stroke="#C9D4DC" stroke-width="0.900" fill="none"/><path d="M2 3 Q7.500 1.200 13 3" stroke="#EDF2F6" stroke-width="1" fill="none"/><path d="M1.800 5.500h3M1.800 8h3" stroke="#F2F6F9" stroke-width="1"/><path d="M9.200 13.500 V6 q0-2.300 2-2.300 q2 0 2 2.300 V12.500" stroke="#DDE6ED" stroke-width="1" fill="#8E9CA9"/></svg>
<div class="a" style="left:22px;top:375px;width:418px;height:25px;background:#fff;border-bottom:1px solid #ECEBE4"></div>
<div class="a" style="left:223px;top:375px;width:1px;height:25px;background:#E6E5E0"></div>
<div class="t" style="letter-spacing:0.152px;left:24px;top:381px">Reject Updates During Edit</div>
<div class="a" style="left:228px;top:381px;width:12px;height:12px;background:#fff;border:1px solid #8E8F8F"></div>
<svg style="left:229px;top:382px" width="10" height="10" viewBox="0 0 10 10"><path d="M1.500 4.500 L4 7.500 L8.500 1.500" stroke="#5F6B78" stroke-width="2" fill="none"/></svg>
<div class="t" style="letter-spacing:-0.072px;left:244px;top:381px">true</div>
<svg style="left:423px;top:379px" width="15" height="16" viewBox="0 0 15 16"><rect x="0.500" y="0.500" width="14" height="15" rx="3.500" fill="url(#dbg)" stroke="#5F6B77"/><path d="M1.200 13 L8 8.200 L9 8.200 V14.600 H3.500 Q1.200 14.600 1.200 13Z" fill="#7C8A97" opacity="0.850"/><path d="M2 12.800 L8.200 8.400" stroke="#C9D4DC" stroke-width="0.900" fill="none"/><path d="M2 3 Q7.500 1.200 13 3" stroke="#EDF2F6" stroke-width="1" fill="none"/><path d="M1.800 5.500h3M1.800 8h3" stroke="#F2F6F9" stroke-width="1"/><path d="M9.200 13.500 V6 q0-2.300 2-2.300 q2 0 2 2.300 V12.500" stroke="#DDE6ED" stroke-width="1" fill="#8E9CA9"/></svg>
<div class="a" style="left:22px;top:400px;width:418px;height:23px;background:#FBFAF2;border-bottom:1px solid #ECEBE4"></div>
<div class="a" style="left:223px;top:400px;width:1px;height:23px;background:#E6E5E0"></div>
<div class="t" style="letter-spacing:0.176px;left:24px;top:405px">Touchscreen Mode</div>
<div class="t" style="letter-spacing:0.212px;left:227px;top:405px">Single-Click</div>
<div class="a" style="left:399px;top:403px;width:18px;height:17px;background:linear-gradient(#FAFAF9,#E2E1DD);border:1px solid #777;border-radius:2px"></div>
<div class="dd" style="left:403px;top:410px;border-width:4px 4px 0 4px;border-top-color:#333"></div>
<svg style="left:423px;top:403px" width="15" height="16" viewBox="0 0 15 16"><rect x="0.500" y="0.500" width="14" height="15" rx="3.500" fill="url(#dbg)" stroke="#5F6B77"/><path d="M1.200 13 L8 8.200 L9 8.200 V14.600 H3.500 Q1.200 14.600 1.200 13Z" fill="#7C8A97" opacity="0.850"/><path d="M2 12.800 L8.200 8.400" stroke="#C9D4DC" stroke-width="0.900" fill="none"/><path d="M2 3 Q7.500 1.200 13 3" stroke="#EDF2F6" stroke-width="1" fill="none"/><path d="M1.800 5.500h3M1.800 8h3" stroke="#F2F6F9" stroke-width="1"/><path d="M9.200 13.500 V6 q0-2.300 2-2.300 q2 0 2 2.300 V12.500" stroke="#DDE6ED" stroke-width="1" fill="#8E9CA9"/></svg>
<div class="a" style="left:10px;top:427px;width:9px;height:9px;border:1px solid #9C9A8E;background:#fff"></div>
<div class="a" style="left:12px;top:431px;width:5px;height:1px;background:#000"></div>
<div class="t b" style="letter-spacing:-0.179px;left:23px;top:427px;color:#8E8C84">Data</div>
<div class="a" style="left:22px;top:442px;width:418px;height:23px;background:#FBFAF2;border-bottom:1px solid #ECEBE4"></div>
<div class="a" style="left:223px;top:442px;width:1px;height:23px;background:#E6E5E0"></div>
<div class="t" style="letter-spacing:0.108px;left:24px;top:447px">Number Type</div>
<div class="t" style="letter-spacing:0.042px;left:227px;top:447px">Float</div>
<div class="a" style="left:399px;top:445px;width:18px;height:17px;background:linear-gradient(#FAFAF9,#E2E1DD);border:1px solid #777;border-radius:2px"></div>
<div class="dd" style="left:403px;top:452px;border-width:4px 4px 0 4px;border-top-color:#333"></div>
<svg style="left:423px;top:445px" width="15" height="16" viewBox="0 0 15 16"><rect x="0.500" y="0.500" width="14" height="15" rx="3.500" fill="url(#dbg)" stroke="#5F6B77"/><path d="M1.200 13 L8 8.200 L9 8.200 V14.600 H3.500 Q1.200 14.600 1.200 13Z" fill="#7C8A97" opacity="0.850"/><path d="M2 12.800 L8.200 8.400" stroke="#C9D4DC" stroke-width="0.900" fill="none"/><path d="M2 3 Q7.500 1.200 13 3" stroke="#EDF2F6" stroke-width="1" fill="none"/><path d="M1.800 5.500h3M1.800 8h3" stroke="#F2F6F9" stroke-width="1"/><path d="M9.200 13.500 V6 q0-2.300 2-2.300 q2 0 2 2.300 V12.500" stroke="#DDE6ED" stroke-width="1" fill="#8E9CA9"/></svg>
<div class="a" style="left:22px;top:465px;width:418px;height:21px;background:#fff;border-bottom:1px solid #ECEBE4"></div>
<div class="a" style="left:223px;top:465px;width:1px;height:21px;background:#E6E5E0"></div>
<div class="t" style="letter-spacing:0.041px;left:24px;top:469px">Maximum</div>
<div class="t" style="letter-spacing:0.034px;left:300px;top:469px;width:115.500px;text-align:right">100,0</div>
<svg style="left:422px;top:467px" width="15" height="16" viewBox="0 0 15 16"><rect x="0.500" y="0.500" width="14" height="15" rx="3.500" fill="url(#dbg)" stroke="#5F6B77"/><path d="M1.200 13 L8 8.200 L9 8.200 V14.600 H3.500 Q1.200 14.600 1.200 13Z" fill="#7C8A97" opacity="0.850"/><path d="M2 12.800 L8.200 8.400" stroke="#C9D4DC" stroke-width="0.900" fill="none"/><path d="M2 3 Q7.500 1.200 13 3" stroke="#EDF2F6" stroke-width="1" fill="none"/><path d="M1.800 5.500h3M1.800 8h3" stroke="#F2F6F9" stroke-width="1"/><path d="M9.200 13.500 V6 q0-2.300 2-2.300 q2 0 2 2.300 V12.500" stroke="#DDE6ED" stroke-width="1" fill="#8E9CA9"/></svg>
<div class="a" style="left:22px;top:486px;width:418px;height:21px;background:#FBFAF2;border-bottom:1px solid #ECEBE4"></div>
<div class="a" style="left:223px;top:486px;width:1px;height:21px;background:#E6E5E0"></div>
<div class="t" style="letter-spacing:0.233px;left:24px;top:490px">Minimum</div>
<div class="t" style="letter-spacing:-0.163px;left:300px;top:490px;width:115.500px;text-align:right">0,0</div>
<svg style="left:422px;top:488px" width="15" height="16" viewBox="0 0 15 16"><rect x="0.500" y="0.500" width="14" height="15" rx="3.500" fill="url(#dbg)" stroke="#5F6B77"/><path d="M1.200 13 L8 8.200 L9 8.200 V14.600 H3.500 Q1.200 14.600 1.200 13Z" fill="#7C8A97" opacity="0.850"/><path d="M2 12.800 L8.200 8.400" stroke="#C9D4DC" stroke-width="0.900" fill="none"/><path d="M2 3 Q7.500 1.200 13 3" stroke="#EDF2F6" stroke-width="1" fill="none"/><path d="M1.800 5.500h3M1.800 8h3" stroke="#F2F6F9" stroke-width="1"/><path d="M9.200 13.500 V6 q0-2.300 2-2.300 q2 0 2 2.300 V12.500" stroke="#DDE6ED" stroke-width="1" fill="#8E9CA9"/></svg>
<div class="a" style="left:22px;top:507px;width:418px;height:21px;background:#fff;border-bottom:1px solid #ECEBE4"></div>
<div class="a" style="left:223px;top:507px;width:1px;height:21px;background:#E6E5E0"></div>
<div class="t" style="letter-spacing:0.027px;left:24px;top:511px">Value (Integer)</div>
<div class="t" style="left:300px;top:511px;width:115.500px;text-align:right">1</div>
<svg style="left:423px;top:509px" width="15" height="16" viewBox="0 0 15 16"><rect x="0.500" y="0.500" width="14" height="15" rx="3.500" fill="url(#dbg)" stroke="#5F6B77"/><path d="M1.200 13 L8 8.200 L9 8.200 V14.600 H3.500 Q1.200 14.600 1.200 13Z" fill="#7C8A97" opacity="0.850"/><path d="M2 12.800 L8.200 8.400" stroke="#C9D4DC" stroke-width="0.900" fill="none"/><path d="M2 3 Q7.500 1.200 13 3" stroke="#EDF2F6" stroke-width="1" fill="none"/><path d="M1.800 5.500h3M1.800 8h3" stroke="#F2F6F9" stroke-width="1"/><path d="M9.200 13.500 V6 q0-2.300 2-2.300 q2 0 2 2.300 V12.500" stroke="#DDE6ED" stroke-width="1" fill="#8E9CA9"/></svg>
<div class="a" style="left:22px;top:528px;width:418px;height:21px;background:#FBFAF2;border-bottom:1px solid #ECEBE4"></div>
<div class="a" style="left:223px;top:528px;width:1px;height:21px;background:#E6E5E0"></div>
<div class="t" style="letter-spacing:0.146px;left:24px;top:532px">Value (Double)</div>
<div class="t" style="letter-spacing:-0.163px;left:300px;top:532px;width:115.500px;text-align:right">1,0</div>
<svg style="left:422px;top:530px" width="15" height="16" viewBox="0 0 15 16"><rect x="0.500" y="0.500" width="14" height="15" rx="3.500" fill="url(#dbg)" stroke="#5F6B77"/><path d="M1.200 13 L8 8.200 L9 8.200 V14.600 H3.500 Q1.200 14.600 1.200 13Z" fill="#7C8A97" opacity="0.850"/><path d="M2 12.800 L8.200 8.400" stroke="#C9D4DC" stroke-width="0.900" fill="none"/><path d="M2 3 Q7.500 1.200 13 3" stroke="#EDF2F6" stroke-width="1" fill="none"/><path d="M1.800 5.500h3M1.800 8h3" stroke="#F2F6F9" stroke-width="1"/><path d="M9.200 13.500 V6 q0-2.300 2-2.300 q2 0 2 2.300 V12.500" stroke="#DDE6ED" stroke-width="1" fill="#8E9CA9"/></svg>
<div class="a" style="left:22px;top:549px;width:418px;height:21px;background:#fff;border-bottom:1px solid #ECEBE4"></div>
<div class="a" style="left:223px;top:549px;width:1px;height:21px;background:#E6E5E0"></div>
<div class="t" style="letter-spacing:0.114px;left:24px;top:553px">Value (Long)</div>
<div class="t" style="left:300px;top:553px;width:115.500px;text-align:right">1</div>
<svg style="left:422px;top:551px" width="15" height="16" viewBox="0 0 15 16"><rect x="0.500" y="0.500" width="14" height="15" rx="3.500" fill="url(#dbg)" stroke="#5F6B77"/><path d="M1.200 13 L8 8.200 L9 8.200 V14.600 H3.500 Q1.200 14.600 1.200 13Z" fill="#7C8A97" opacity="0.850"/><path d="M2 12.800 L8.200 8.400" stroke="#C9D4DC" stroke-width="0.900" fill="none"/><path d="M2 3 Q7.500 1.200 13 3" stroke="#EDF2F6" stroke-width="1" fill="none"/><path d="M1.800 5.500h3M1.800 8h3" stroke="#F2F6F9" stroke-width="1"/><path d="M9.200 13.500 V6 q0-2.300 2-2.300 q2 0 2 2.300 V12.500" stroke="#DDE6ED" stroke-width="1" fill="#8E9CA9"/></svg>
<div class="a" style="left:22px;top:570px;width:418px;height:21px;background:#FBFAF2;border-bottom:1px solid #ECEBE4"></div>
<div class="a" style="left:223px;top:570px;width:1px;height:21px;background:#E6E5E0"></div>
<div class="t" style="letter-spacing:0.030px;left:24px;top:574px">Value (Float)</div>
<div class="t" style="letter-spacing:0.010px;left:300px;top:574px;width:115.500px;text-align:right">1,00</div>
<svg style="left:422px;top:572px" width="15" height="16" viewBox="0 0 15 16"><rect x="0.500" y="0.500" width="14" height="15" rx="3.500" fill="url(#dbg)" stroke="#5F6B77"/><path d="M1.200 13 L8 8.200 L9 8.200 V14.600 H3.500 Q1.200 14.600 1.200 13Z" fill="#7C8A97" opacity="0.850"/><path d="M2 12.800 L8.200 8.400" stroke="#C9D4DC" stroke-width="0.900" fill="none"/><path d="M2 3 Q7.500 1.200 13 3" stroke="#EDF2F6" stroke-width="1" fill="none"/><path d="M1.800 5.500h3M1.800 8h3" stroke="#F2F6F9" stroke-width="1"/><path d="M9.200 13.500 V6 q0-2.300 2-2.300 q2 0 2 2.300 V12.500" stroke="#DDE6ED" stroke-width="1" fill="#8E9CA9"/></svg>
<div class="a" style="left:22px;top:591px;width:418px;height:21px;background:#fff;border-bottom:1px solid #ECEBE4"></div>
<div class="a" style="left:223px;top:591px;width:1px;height:21px;background:#E6E5E0"></div>
<div class="t" style="letter-spacing:-0.036px;left:24px;top:595px">Data Quality</div>
<div class="t" style="letter-spacing:-0.486px;left:300px;top:595px;width:115.500px;text-align:right">-1</div>
<svg style="left:423px;top:593px" width="15" height="16" viewBox="0 0 15 16"><rect x="0.500" y="0.500" width="14" height="15" rx="3.500" fill="url(#dbg)" stroke="#5F6B77"/><path d="M1.200 13 L8 8.200 L9 8.200 V14.600 H3.500 Q1.200 14.600 1.200 13Z" fill="#7C8A97" opacity="0.850"/><path d="M2 12.800 L8.200 8.400" stroke="#C9D4DC" stroke-width="0.900" fill="none"/><path d="M2 3 Q7.500 1.200 13 3" stroke="#EDF2F6" stroke-width="1" fill="none"/><path d="M1.800 5.500h3M1.800 8h3" stroke="#F2F6F9" stroke-width="1"/><path d="M9.200 13.500 V6 q0-2.300 2-2.300 q2 0 2 2.300 V12.500" stroke="#DDE6ED" stroke-width="1" fill="#8E9CA9"/></svg>
<div class="a" style="left:10px;top:616px;width:9px;height:9px;border:1px solid #9C9A8E;background:#fff"></div>
<div class="a" style="left:12px;top:620px;width:5px;height:1px;background:#000"></div>
<div class="t b" style="letter-spacing:-0.050px;left:23px;top:616px;color:#8E8C84">Appearance</div>
<div class="a" style="left:22px;top:631px;width:418px;height:22px;background:#fff;border-bottom:1px solid #ECEBE4"></div>
<div class="a" style="left:223px;top:631px;width:1px;height:22px;background:#E6E5E0"></div>
<div class="t" style="letter-spacing:-0.079px;left:24px;top:635px">Font</div>
<div class="t" style="letter-spacing:0.071px;left:225px;top:635px">Dialog, Plain, 12</div>
<div class="a" style="left:423px;top:632px;width:16px;height:19px;background:linear-gradient(#fff,#EEEDEA);border:1px solid #333;border-radius:3px"></div>
<div class="dd" style="left:427px;top:640px;border-left-width:4.500px;border-right-width:4.500px;border-top-width:5px"></div>
<div class="a" style="left:22px;top:653px;width:418px;height:26px;background:#FBFAF2;border-bottom:1px solid #ECEBE4"></div>
<div class="a" style="left:223px;top:653px;width:1px;height:26px;background:#E6E5E0"></div>
<div class="t" style="letter-spacing:0.146px;left:24px;top:659px">Foreground Color</div>
<div class="t" style="letter-spacing:-0.141px;left:225px;top:659px">0,0,0</div>
<div class="a" style="left:337px;top:656px;width:51px;height:19px;background:#000"></div>
<div class="dd" style="left:373px;top:663px;border-left-width:5px;border-right-width:5px;border-top:5px solid #555"></div>
<div class="a" style="left:396px;top:658px;width:14px;height:14px;border-radius:50%;background:conic-gradient(#F03030,#F0D020,#30D030,#20D0D0,#3040F0,#E030E0,#F03030);border:1px solid #555"></div>
<div class="a" style="left:400px;top:662px;width:6px;height:6px;border-radius:50%;background:radial-gradient(#fff,rgba(255,255,255,0))"></div>
<svg style="left:423px;top:656px" width="15" height="16" viewBox="0 0 15 16"><rect x="0.500" y="0.500" width="14" height="15" rx="3.500" fill="url(#dbg)" stroke="#5F6B77"/><path d="M1.200 13 L8 8.200 L9 8.200 V14.600 H3.500 Q1.200 14.600 1.200 13Z" fill="#7C8A97" opacity="0.850"/><path d="M2 12.800 L8.200 8.400" stroke="#C9D4DC" stroke-width="0.900" fill="none"/><path d="M2 3 Q7.500 1.200 13 3" stroke="#EDF2F6" stroke-width="1" fill="none"/><path d="M1.800 5.500h3M1.800 8h3" stroke="#F2F6F9" stroke-width="1"/><path d="M9.200 13.500 V6 q0-2.300 2-2.300 q2 0 2 2.300 V12.500" stroke="#DDE6ED" stroke-width="1" fill="#8E9CA9"/></svg>
<div class="a" style="left:22px;top:679px;width:418px;height:26px;background:#fff;border-bottom:1px solid #ECEBE4"></div>
<div class="a" style="left:223px;top:679px;width:1px;height:26px;background:#E6E5E0"></div>
<div class="t" style="letter-spacing:0.095px;left:24px;top:685px">Background</div>
<div class="t" style="letter-spacing:0.133px;left:225px;top:685px">255,255,255</div>
<div class="a" style="left:337px;top:682px;width:51px;height:19px;background:#fff"></div>
<div class="dd" style="left:373px;top:689px;border-left-width:5px;border-right-width:5px;border-top:5px solid #111"></div>
<div class="a" style="left:396px;top:684px;width:14px;height:14px;border-radius:50%;background:conic-gradient(#F03030,#F0D020,#30D030,#20D0D0,#3040F0,#E030E0,#F03030);border:1px solid #555"></div>
<div class="a" style="left:400px;top:688px;width:6px;height:6px;border-radius:50%;background:radial-gradient(#fff,rgba(255,255,255,0))"></div>
<svg style="left:423px;top:682px" width="15" height="16" viewBox="0 0 15 16"><rect x="0.500" y="0.500" width="14" height="15" rx="3.500" fill="url(#dbg)" stroke="#5F6B77"/><path d="M1.200 13 L8 8.200 L9 8.200 V14.600 H3.500 Q1.200 14.600 1.200 13Z" fill="#7C8A97" opacity="0.850"/><path d="M2 12.800 L8.200 8.400" stroke="#C9D4DC" stroke-width="0.900" fill="none"/><path d="M2 3 Q7.500 1.200 13 3" stroke="#EDF2F6" stroke-width="1" fill="none"/><path d="M1.800 5.500h3M1.800 8h3" stroke="#F2F6F9" stroke-width="1"/><path d="M9.200 13.500 V6 q0-2.300 2-2.300 q2 0 2 2.300 V12.500" stroke="#DDE6ED" stroke-width="1" fill="#8E9CA9"/></svg>
<div class="a" style="left:22px;top:705px;width:418px;height:26px;background:#FBFAF2;border-bottom:1px solid #ECEBE4"></div>
<div class="a" style="left:223px;top:705px;width:1px;height:26px;background:#E6E5E0"></div>
<div class="t" style="letter-spacing:0.149px;left:24px;top:711px">Non-Editable Background</div>
<div class="t" style="letter-spacing:-0.021px;left:225px;top:711px">241,241,241</div>
<div class="a" style="left:337px;top:708px;width:51px;height:19px;background:#EFEFEF"></div>
<div class="dd" style="left:373px;top:715px;border-left-width:5px;border-right-width:5px;border-top:5px solid #111"></div>
<div class="a" style="left:396px;top:710px;width:14px;height:14px;border-radius:50%;background:conic-gradient(#F03030,#F0D020,#30D030,#20D0D0,#3040F0,#E030E0,#F03030);border:1px solid #555"></div>
<div class="a" style="left:400px;top:714px;width:6px;height:6px;border-radius:50%;background:radial-gradient(#fff,rgba(255,255,255,0))"></div>
<svg style="left:423px;top:708px" width="15" height="16" viewBox="0 0 15 16"><rect x="0.500" y="0.500" width="14" height="15" rx="3.500" fill="url(#dbg)" stroke="#5F6B77"/><path d="M1.200 13 L8 8.200 L9 8.200 V14.600 H3.500 Q1.200 14.600 1.200 13Z" fill="#7C8A97" opacity="0.850"/><path d="M2 12.800 L8.200 8.400" stroke="#C9D4DC" stroke-width="0.900" fill="none"/><path d="M2 3 Q7.500 1.200 13 3" stroke="#EDF2F6" stroke-width="1" fill="none"/><path d="M1.800 5.500h3M1.800 8h3" stroke="#F2F6F9" stroke-width="1"/><path d="M9.200 13.500 V6 q0-2.300 2-2.300 q2 0 2 2.300 V12.500" stroke="#DDE6ED" stroke-width="1" fill="#8E9CA9"/></svg>
<div class="a" style="left:22px;top:731px;width:418px;height:21px;background:#fff;border-bottom:1px solid #ECEBE4"></div>
<div class="a" style="left:223px;top:731px;width:1px;height:21px;background:#E6E5E0"></div>
<div class="a" style="left:22px;top:731px;width:201px;height:21px;background:#FBD38C"></div>
<div class="a" style="left:223px;top:731px;width:217px;height:21px;background:#fff;border:1px solid #FBD38C"></div>
<div class="t" style="letter-spacing:0.208px;left:24px;top:735px">Decimal Format</div>
<div class="t" style="letter-spacing:0.064px;left:225px;top:735px">#,##0.0000</div>
<div class="t b" style="left:399.500px;top:733px;font-size:16px;line-height:16px;height:16px;color:#9A9A9A;-webkit-text-stroke:0.700px #2A2A2A;transform:scaleX(0.900);transform-origin:0 0">%</div>
<svg style="left:423px;top:733px" width="15" height="16" viewBox="0 0 15 16"><rect x="0.500" y="0.500" width="14" height="15" rx="3.500" fill="url(#dbg)" stroke="#5F6B77"/><path d="M1.200 13 L8 8.200 L9 8.200 V14.600 H3.500 Q1.200 14.600 1.200 13Z" fill="#7C8A97" opacity="0.850"/><path d="M2 12.800 L8.200 8.400" stroke="#C9D4DC" stroke-width="0.900" fill="none"/><path d="M2 3 Q7.500 1.200 13 3" stroke="#EDF2F6" stroke-width="1" fill="none"/><path d="M1.800 5.500h3M1.800 8h3" stroke="#F2F6F9" stroke-width="1"/><path d="M9.200 13.500 V6 q0-2.300 2-2.300 q2 0 2 2.300 V12.500" stroke="#DDE6ED" stroke-width="1" fill="#8E9CA9"/></svg>
<div class="a" style="left:22px;top:752px;width:418px;height:21px;background:#FBFAF2;border-bottom:1px solid #ECEBE4"></div>
<div class="a" style="left:223px;top:752px;width:1px;height:21px;background:#E6E5E0"></div>
<div class="t" style="letter-spacing:-0.199px;left:24px;top:756px">Suffix</div>
<svg style="left:402px;top:754px" width="14" height="16" viewBox="0 0 14 16"><rect x="0.500" y="0.500" width="13" height="15" fill="#FDFDFD" stroke="#9AA0A6"/><path d="M2.500 3.500h9M2.500 5.500h8M2.500 7.500h9M2.500 9.500h6M2.500 11.500h9M2.500 13.500h7" stroke="#5A5A5A" stroke-dasharray="3 1 2 1"/></svg>
<svg style="left:423px;top:754px" width="15" height="16" viewBox="0 0 15 16"><rect x="0.500" y="0.500" width="14" height="15" rx="3.500" fill="url(#dbg)" stroke="#5F6B77"/><path d="M1.200 13 L8 8.200 L9 8.200 V14.600 H3.500 Q1.200 14.600 1.200 13Z" fill="#7C8A97" opacity="0.850"/><path d="M2 12.800 L8.200 8.400" stroke="#C9D4DC" stroke-width="0.900" fill="none"/><path d="M2 3 Q7.500 1.200 13 3" stroke="#EDF2F6" stroke-width="1" fill="none"/><path d="M1.800 5.500h3M1.800 8h3" stroke="#F2F6F9" stroke-width="1"/><path d="M9.200 13.500 V6 q0-2.300 2-2.300 q2 0 2 2.300 V12.500" stroke="#DDE6ED" stroke-width="1" fill="#8E9CA9"/></svg>
<div class="a" style="left:22px;top:773px;width:418px;height:21px;background:#fff;border-bottom:1px solid #ECEBE4"></div>
<div class="a" style="left:223px;top:773px;width:1px;height:21px;background:#E6E5E0"></div>
<div class="t" style="letter-spacing:-0.198px;left:24px;top:777px">Styles</div>
<div class="t" style="letter-spacing:-0.072px;left:225px;top:777px">&lt;No Data&gt;</div>
<svg style="left:402px;top:776.5px" width="16" height="15" viewBox="0 0 16 15"><rect x="0.500" y="0.500" width="14" height="12" fill="#F4F8FC" stroke="#7F95B4"/><path d="M0.500 3.500h14M5 3.500v9M10 3.500v9M0.500 7.500h14" stroke="#B8C6DA" stroke-width="0.800"/><rect x="1" y="1" width="13" height="2.500" fill="#B8CCE8"/><circle cx="9.500" cy="8.500" r="3" fill="#fff" stroke="#444" stroke-width="1.200"/><path d="M11.500 10.500 L15 14" stroke="#444" stroke-width="1.800"/></svg>
<svg style="left:423px;top:775px" width="15" height="16" viewBox="0 0 15 16"><rect x="0.500" y="0.500" width="14" height="15" rx="3.500" fill="url(#dbg)" stroke="#5F6B77"/><path d="M1.200 13 L8 8.200 L9 8.200 V14.600 H3.500 Q1.200 14.600 1.200 13Z" fill="#7C8A97" opacity="0.850"/><path d="M2 12.800 L8.200 8.400" stroke="#C9D4DC" stroke-width="0.900" fill="none"/><path d="M2 3 Q7.500 1.200 13 3" stroke="#EDF2F6" stroke-width="1" fill="none"/><path d="M1.800 5.500h3M1.800 8h3" stroke="#F2F6F9" stroke-width="1"/><path d="M9.200 13.500 V6 q0-2.300 2-2.300 q2 0 2 2.300 V12.500" stroke="#DDE6ED" stroke-width="1" fill="#8E9CA9"/></svg>
<div class="a" style="left:10px;top:798px;width:9px;height:9px;border:1px solid #9C9A8E;background:#fff"></div>
<div class="a" style="left:12px;top:802px;width:5px;height:1px;background:#000"></div>
<div class="t b" style="letter-spacing:-0.341px;left:23px;top:798px;color:#8E8C84">Layout</div>
<div class="a" style="left:22px;top:813px;width:418px;height:23px;background:#fff;border-bottom:1px solid #ECEBE4"></div>
<div class="a" style="left:223px;top:813px;width:1px;height:23px;background:#E6E5E0"></div>
<div class="t" style="letter-spacing:0.127px;left:24px;top:818px">Horizontal Alignment</div>
<div class="t" style="letter-spacing:0.212px;left:227px;top:818px">Trailing</div>
<div class="a" style="left:399px;top:816px;width:18px;height:17px;background:linear-gradient(#FAFAF9,#E2E1DD);border:1px solid #777;border-radius:2px"></div>
<div class="dd" style="left:403px;top:823px;border-width:4px 4px 0 4px;border-top-color:#333"></div>
<svg style="left:423px;top:816px" width="15" height="16" viewBox="0 0 15 16"><rect x="0.500" y="0.500" width="14" height="15" rx="3.500" fill="url(#dbg)" stroke="#5F6B77"/><path d="M1.200 13 L8 8.200 L9 8.200 V14.600 H3.500 Q1.200 14.600 1.200 13Z" fill="#7C8A97" opacity="0.850"/><path d="M2 12.800 L8.200 8.400" stroke="#C9D4DC" stroke-width="0.900" fill="none"/><path d="M2 3 Q7.500 1.200 13 3" stroke="#EDF2F6" stroke-width="1" fill="none"/><path d="M1.800 5.500h3M1.800 8h3" stroke="#F2F6F9" stroke-width="1"/><path d="M9.200 13.500 V6 q0-2.300 2-2.300 q2 0 2 2.300 V12.500" stroke="#DDE6ED" stroke-width="1" fill="#8E9CA9"/></svg>
<div class="a" style="left:441px;top:247px;width:15px;height:589px;background:linear-gradient(90deg,#E0E0DE,#F3F3F1);border-left:1px solid #D8D8D6"></div>
<div class="a" style="left:441px;top:247px;width:15px;height:15px;background:linear-gradient(#F8F8F7,#DEDDD9);border:1px solid #8A8A88"></div>
<div class="dd" style="left:444px;top:252px;border-top:0;border-bottom:4px solid #222"></div>
<div class="a" style="left:441px;top:401px;width:15px;height:421px;background:linear-gradient(90deg,#CDD1D5,#BFC4C9 50%,#AEB4BA);border:1px solid #8A9098;border-radius:2px"></div>
<div class="a" style="left:444px;top:604px;width:9px;height:1px;background:#8E949B"></div>
<div class="a" style="left:444px;top:606px;width:9px;height:1px;background:#8E949B"></div>
<div class="a" style="left:444px;top:608px;width:9px;height:1px;background:#8E949B"></div>
<div class="a" style="left:444px;top:610px;width:9px;height:1px;background:#8E949B"></div>
<div class="a" style="left:444px;top:612px;width:9px;height:1px;background:#8E949B"></div>
<div class="a" style="left:444px;top:614px;width:9px;height:1px;background:#8E949B"></div>
<div class="a" style="left:441px;top:822px;width:15px;height:13px;background:linear-gradient(#F8F8F7,#DEDDD9);border:1px solid #8A8A88"></div>
<div class="dd" style="left:444px;top:827px;border-top-color:#222"></div>
<div class="a" style="left:457px;top:437px;width:2px;height:34px;background:repeating-linear-gradient(#1C3D94 0,#1C3D94 2px,transparent 2px,transparent 4px)"></div>
<div class="a" style="left:4px;top:840px;width:1440px;height:1px;background:#B4B2AC"></div>
<div class="a" style="left:4px;top:841px;width:1440px;height:1px;background:#FAFAF8"></div>
<div class="a" style="left:6px;top:836px;width:451px;height:1px;background:#D2D0CA"></div>
<div class="t" style="left:11px;top:848px"></div>
<div class="t b" style="letter-spacing:-0.110px;left:11px;top:848px">Numeric Text Field</div>
<div class="t" style="letter-spacing:-0.462px;left:119px;top:848px;font-family:'Liberation Mono',monospace;font-size:11px">"cantidad"</div>
<div class="t" style="letter-spacing:0.001px;left:187.500px;top:848px">(128,271) [64x22]</div>
<div class="hdr" style="left:460px;top:73px;width:958px;height:19px"></div>
<div class="t" style="letter-spacing:0.145px;left:466px;top:76px">Component Palette</div>
<svg style="left:1355px;top:78px" width="50" height="10" viewBox="0 0 50 10"><path d="M2.500 0.500 H9.500 V5 M0.500 3.500 H6.500 V8.500 H0.500Z M22.500 0.500 H26.500 V5.500 H22.500Z M26 0.500V5.500 M21 5.500 H28.500 M24.500 5.500 V9.500 M41.500 0.500 L48.500 7.500 M48.500 0.500 L41.500 7.500" fill="none" stroke="#111" stroke-width="1"/></svg>
<div class="a" style="left:462px;top:115px;width:955px;height:54px;background:#ECEBE7;border:1px solid #8C8C8A;border-top-color:#7E7E7C;box-shadow:inset 1px 1px 0 #F8F8F6"></div>
<div class="a" style="left:462px;top:96px;width:49px;height:21px;background:#ECEBE7;border:1px solid #8C8C8A;border-bottom:0;border-radius:3px 3px 0 0;box-shadow:inset 1px 1px 0 #fff"></div>
<div class="t" style="letter-spacing:0.079px;left:472.5px;top:100px">Input</div>
<div class="a" style="left:511px;top:97px;width:63px;height:18px;background:linear-gradient(#F6F6F4,#EDECE9 50%,#DDDCD8);border:1px solid #8C8C8A;border-left-color:#B0B0AE;border-bottom:0;border-radius:3px 3px 0 0;box-shadow:inset 1px 1px 0 #fff"></div>
<div class="t" style="letter-spacing:0.085px;left:519.2px;top:100px">Buttons</div>
<div class="a" style="left:574px;top:97px;width:62px;height:18px;background:linear-gradient(#F6F6F4,#EDECE9 50%,#DDDCD8);border:1px solid #8C8C8A;border-left-color:#B0B0AE;border-bottom:0;border-radius:3px 3px 0 0;box-shadow:inset 1px 1px 0 #fff"></div>
<div class="t" style="letter-spacing:0.234px;left:583.4px;top:100px">Display</div>
<div class="a" style="left:636px;top:97px;width:59px;height:18px;background:linear-gradient(#F6F6F4,#EDECE9 50%,#DDDCD8);border:1px solid #8C8C8A;border-left-color:#B0B0AE;border-bottom:0;border-radius:3px 3px 0 0;box-shadow:inset 1px 1px 0 #fff"></div>
<div class="t" style="letter-spacing:0.435px;left:645px;top:100px">Tables</div>
<div class="a" style="left:695px;top:97px;width:57px;height:18px;background:linear-gradient(#F6F6F4,#EDECE9 50%,#DDDCD8);border:1px solid #8C8C8A;border-left-color:#B0B0AE;border-bottom:0;border-radius:3px 3px 0 0;box-shadow:inset 1px 1px 0 #fff"></div>
<div class="t" style="letter-spacing:0.076px;left:704.8px;top:100px">Charts</div>
<div class="a" style="left:752px;top:97px;width:72px;height:18px;background:linear-gradient(#F6F6F4,#EDECE9 50%,#DDDCD8);border:1px solid #8C8C8A;border-left-color:#B0B0AE;border-bottom:0;border-radius:3px 3px 0 0;box-shadow:inset 1px 1px 0 #fff"></div>
<div class="t" style="letter-spacing:0.225px;left:762.7px;top:100px">Calendar</div>
<div class="a" style="left:824px;top:97px;width:46px;height:18px;background:linear-gradient(#F6F6F4,#EDECE9 50%,#DDDCD8);border:1px solid #8C8C8A;border-left-color:#B0B0AE;border-bottom:0;border-radius:3px 3px 0 0;box-shadow:inset 1px 1px 0 #fff"></div>
<div class="t" style="letter-spacing:-0.168px;left:834.4px;top:100px">Misc</div>
<div class="a" style="left:870px;top:97px;width:95px;height:18px;background:linear-gradient(#F6F6F4,#EDECE9 50%,#DDDCD8);border:1px solid #8C8C8A;border-left-color:#B0B0AE;border-bottom:0;border-radius:3px 3px 0 0;box-shadow:inset 1px 1px 0 #fff"></div>
<svg style="left:879px;top:98px" width="16" height="16" viewBox="0 0 16 16"><path d="M6 1 q3-1 3 2 q3-2 5 1 q1 3-2 4 q2 3-1 4 q-3 1-4-2 q-1 4-4 3 q-3-2 0-5 q-4 0-2-4 q2-2 4 0 q-1-2 1-3z" fill="#3FA83A" stroke="#2C7E28" stroke-width="0.800"/><path d="M5 5 q2 0 3 3" stroke="#8FD68A" fill="none"/></svg>
<div class="t" style="letter-spacing:0.141px;left:899.500px;top:100px">Reporting</div>
<div class="a" style="left:777px;top:136px;width:24px;height:12px;background:#fff;border:1px solid #666"></div>
<div class="t" style="left:778.500px;top:135.500px;font-size:10.500px;color:#222;letter-spacing:-0.400px">abc</div>
<div class="a" style="left:820px;top:136px;width:24px;height:12px;background:#fff;border:1px solid #666"></div>
<div class="t" style="left:820px;top:136px;font-size:9.500px;color:#222;width:22.500px;text-align:right;letter-spacing:-0.200px">123</div>
<div class="a" style="left:861px;top:136px;width:28px;height:12px;background:#fff;border:1px solid #666"></div>
<div class="a" style="left:880px;top:137px;width:8px;height:10px;background:#D8D8D8;border-left:1px solid #777"></div>
<div class="dd" style="left:881px;top:138px;border-width:0 3px 3px 3px;border-bottom:3px solid #000;border-top:0"></div><div class="dd" style="left:881px;top:143px;border-width:3px 3px 0 3px"></div>
<div class="a" style="left:904px;top:136px;width:28px;height:12px;background:#fff;border:1px solid #666"></div>
<div class="t b" style="left:906px;top:134px;font-size:9px;letter-spacing:1.600px">-/-/-</div>
<div class="a" style="left:947px;top:136px;width:28px;height:12px;background:#fff;border:1px solid #666"></div>
<div class="a" style="left:951px;top:141px;width:3px;height:3px;background:#000;box-shadow:5px 0 0 #000,10px 0 0 #000"></div>
<div class="a" style="left:990px;top:128px;width:28px;height:28px;background:#fff;border:1px solid #666"></div>
<div class="t" style="left:993px;top:128px;font-size:11px;letter-spacing:0.300px">text</div>
<div class="a" style="left:1033px;top:136px;width:28px;height:12px;background:#fff;border:1px solid #666"></div>
<div class="a" style="left:1049px;top:137px;width:11px;height:10px;background:#D4D4D4;border:1px solid #777"></div><div class="dd" style="left:1052px;top:141px;border-width:3px 3px 0 3px"></div>
<div class="a" style="left:1076px;top:139px;width:30px;height:6px;background:#BDBDBD;border:1px solid #8A8A8A"></div>
<svg style="left:1083px;top:135px" width="16" height="16" viewBox="0 0 16 16"><path d="M1 1 h14 v7 l-7 7 l-7-7z" fill="#9A9AD8" stroke="#444" stroke-width="1"/><path d="M4 4h1M7 4h1M10 4h1M5.500 6h1M8.500 6h1M4 8h1M7 8h1M10 8h1" stroke="#4A4AA0"/></svg>
<div class="hdots" style="left:921px;top:172px"></div>
<div class="a" style="left:463px;top:178px;width:954px;height:636px;background:#828A8C;border:1px solid #6E6E6E;border-right-color:#D8D8D6;border-bottom-color:#D8D8D6"></div>
<div class="a" style="left:460px;top:176px;width:1px;height:662px;background:#D4D4D2"></div>
<div class="a" style="left:464px;top:179px;width:952px;height:11px;background:#F3F4F6"></div>
<div class="a" style="left:464px;top:179px;width:11px;height:634px;background:#F3F4F6"></div>
<div class="a" style="left:1415px;top:179px;width:1px;height:634px;background:#6E7476"></div>
<svg style="left:464px;top:179px" width="952" height="634" viewBox="464 179 952 634" font-family="Liberation Sans,sans-serif" font-size="8" fill="#111"><text x="578" y="185.800">100</text><text x="678" y="185.800">200</text><text x="778" y="185.800">300</text><text x="878" y="185.800">400</text><text x="978" y="185.800">500</text><text x="1078" y="185.800">600</text><text x="1178" y="185.800">700</text><text x="1278" y="185.800">800</text><text x="1378" y="185.800">900</text><text x="466" y="299.5" font-size="9">1</text><text x="466" y="306.5" font-size="9">0</text><text x="466" y="313.5" font-size="9">0</text><text x="466" y="399.5" font-size="9">2</text><text x="466" y="406.5" font-size="9">0</text><text x="466" y="413.5" font-size="9">0</text><text x="466" y="499.5" font-size="9">3</text><text x="466" y="506.5" font-size="9">0</text><text x="466" y="513.5" font-size="9">0</text><text x="466" y="599.5" font-size="9">4</text><text x="466" y="606.5" font-size="9">0</text><text x="466" y="613.5" font-size="9">0</text><text x="466" y="699.5" font-size="9">5</text><text x="466" y="706.5" font-size="9">0</text><text x="466" y="713.5" font-size="9">0</text><text x="466" y="799.5" font-size="9">6</text><text x="466" y="806.5" font-size="9">0</text><text x="466" y="813.5" font-size="9">0</text><path d="M486.5 188V190M496.5 185V190M506.5 188V190M516.5 185V190M526.5 188V190M536.5 185V190M546.5 188V190M556.5 185V190M566.5 188V190M576.5 179V190M586.5 188V190M596.5 185V190M606.5 188V190M616.5 185V190M626.5 188V190M636.5 185V190M646.5 188V190M656.5 185V190M666.5 188V190M676.5 179V190M686.5 188V190M696.5 185V190M706.5 188V190M716.5 185V190M726.5 188V190M736.5 185V190M746.5 188V190M756.5 185V190M766.5 188V190M776.5 179V190M786.5 188V190M796.5 185V190M806.5 188V190M816.5 185V190M826.5 188V190M836.5 185V190M846.5 188V190M856.5 185V190M866.5 188V190M876.5 179V190M886.5 188V190M896.5 185V190M906.5 188V190M916.5 185V190M926.5 188V190M936.5 185V190M946.5 188V190M956.5 185V190M966.5 188V190M976.5 179V190M986.5 188V190M996.5 185V190M1006.5 188V190M1016.5 185V190M1026.5 188V190M1036.5 185V190M1046.5 188V190M1056.5 185V190M1066.5 188V190M1076.5 179V190M1086.5 188V190M1096.5 185V190M1106.5 188V190M1116.5 185V190M1126.5 188V190M1136.5 185V190M1146.5 188V190M1156.5 185V190M1166.5 188V190M1176.5 179V190M1186.5 188V190M1196.5 185V190M1206.5 188V190M1216.5 185V190M1226.5 188V190M1236.5 185V190M1246.5 188V190M1256.5 185V190M1266.5 188V190M1276.5 179V190M1286.5 188V190M1296.5 185V190M1306.5 188V190M1316.5 185V190M1326.5 188V190M1336.5 185V190M1346.5 188V190M1356.5 185V190M1366.5 188V190M1376.5 179V190M1386.5 188V190M1396.5 185V190M1406.5 188V190M473 201.5H475M470 211.5H475M473 221.5H475M470 231.5H475M473 241.5H475M470 251.5H475M473 261.5H475M470 271.5H475M473 281.5H475M464 291.5H475M473 301.5H475M470 311.5H475M473 321.5H475M470 331.5H475M473 341.5H475M470 351.5H475M473 361.5H475M470 371.5H475M473 381.5H475M464 391.5H475M473 401.5H475M470 411.5H475M473 421.5H475M470 431.5H475M473 441.5H475M470 451.5H475M473 461.5H475M470 471.5H475M473 481.5H475M464 491.5H475M473 501.5H475M470 511.5H475M473 521.5H475M470 531.5H475M473 541.5H475M470 551.5H475M473 561.5H475M470 571.5H475M473 581.5H475M464 591.5H475M473 601.5H475M470 611.5H475M473 621.5H475M470 631.5H475M473 641.5H475M470 651.5H475M473 661.5H475M470 671.5H475M473 681.5H475M464 691.5H475M473 701.5H475M470 711.5H475M473 721.5H475M470 731.5H475M473 741.5H475M470 751.5H475M473 761.5H475M470 771.5H475M473 781.5H475M464 791.5H475M473 801.5H475M470 811.5H475" stroke="#000" stroke-width="1" fill="none"/></svg>
<div class="a" style="left:1276px;top:191px;width:1px;height:601px;background:#B4BABC"></div>
<div class="a" style="left:476px;top:791px;width:801px;height:1px;background:#B4BABC"></div>
<div class="t" style="letter-spacing:0.062px;left:1150px;top:777px;width:123px;text-align:right;color:#BCC2C4">Minimum Size</div>
<div class="a" style="left:475px;top:190px;width:940px;height:1px;background:#767676"></div><div class="a" style="left:475px;top:190px;width:1px;height:623px;background:#767676"></div>
<div class="a" style="left:476px;top:191px;width:601px;height:371px;background:#fff;border:1px solid #DCDCDC;border-right-color:#FDFDFB;border-bottom-color:#F6F7DC;border-radius:3px 3px 3px 0;box-shadow:inset 1px 1px 0 #707070,inset -1px -1px 0 #5C5C5C"></div>
<div class="t" style="letter-spacing:0.141px;left:518.7px;top:224px">Nombre:</div>
<div class="t" style="letter-spacing:0.156px;left:506.6px;top:268px">Descripci&oacute;n:</div>
<div class="t" style="letter-spacing:0.110px;left:506.2px;top:401px">Localizaci&oacute;n:</div>
<div class="t" style="letter-spacing:0.047px;left:515.2px;top:469px">Cantidad:</div>
<div class="a" style="left:603px;top:224px;width:326px;height:17px;background:#fff;border:1px solid #6C6C6C;border-radius:2px;box-shadow:inset 1px 1px 0 rgba(0,0,0,.22)"></div>
<div class="a" style="left:603px;top:268px;width:326px;height:101px;background:#fff;border:1px solid #6C6C6C;border-radius:2px;box-shadow:inset 1px 1px 0 rgba(0,0,0,.22)"></div>
<div class="a" style="left:603px;top:401px;width:326px;height:17px;background:#fff;border:1px solid #6C6C6C;border-radius:2px;box-shadow:inset 1px 1px 0 rgba(0,0,0,.22)"></div>
<div class="t" style="left:605px;top:227px;letter-spacing:-1.030px">AAAAAAAAAAAAAAAA</div>
<div class="a" style="left:605px;top:463px;width:62px;height:20px;background:#fff;border:1px solid #77775F;box-shadow:inset 1px 1px 0 #A8A890"></div>
<div class="t" style="letter-spacing:0.033px;left:610px;top:467px;width:54px;text-align:right">1,0000</div>
<div class="a" style="left:860px;top:514px;width:69px;height:25px;background:linear-gradient(#FDFDFD,#EEEDEA 45%,#D6D5D0);border:1px solid #6E6E6E;border-radius:4px;box-shadow:inset 0 0 0 1px rgba(255,255,255,.6)"></div>
<div class="a" style="left:951px;top:513px;width:69px;height:25px;background:linear-gradient(#FDFDFD,#EEEDEA 45%,#D6D5D0);border:1px solid #6E6E6E;border-radius:4px;box-shadow:inset 0 0 0 1px rgba(255,255,255,.6)"></div>
<svg style="left:882px;top:515px" width="24" height="24" viewBox="0 0 24 24"><path d="M8.500 1.500h7v7h7v7h-7v7h-7v-7h-7v-7h7z" fill="#5AD23C" stroke="#2FA01C" stroke-width="1"/><path d="M9.500 2.500h5v7h7v2h-19v-2h7z" fill="#8BE870" opacity="0.800"/></svg>
<svg style="left:974px;top:514px" width="24" height="24" viewBox="0 0 24 24"><rect x="7.500" y="1.500" width="13" height="19" fill="#8A929C" stroke="#5A626C"/><path d="M9.500 2.500 L20.500 0.500 V23 L9.500 20.500Z" fill="#7F86C8" stroke="#5A60A0" stroke-width="0.800"/><rect x="14" y="5" width="4" height="3" fill="#D0D8F4"/><circle cx="18" cy="12.500" r="1" fill="#F0F0F0"/><path d="M0.500 8 h5 v-3.500 l6 6 l-6 6 v-3.500 h-5z" fill="#48C430" stroke="#2A9418" stroke-width="0.800"/></svg>
<div class="a" style="left:478px;top:193px;width:597px;height:367px;background:repeating-linear-gradient(90deg,transparent 0,transparent 48px,rgba(110,110,125,.36) 48px,rgba(110,110,125,.36) 49px,transparent 49px,transparent 50px),repeating-linear-gradient(180deg,transparent 0,transparent 48px,rgba(110,110,125,.36) 48px,rgba(110,110,125,.36) 49px,transparent 49px,transparent 50px),repeating-linear-gradient(90deg,transparent 0,transparent 8px,rgba(208,220,90,.34) 8px,rgba(208,220,90,.34) 9px,transparent 9px,transparent 18px,rgba(208,220,90,.34) 18px,rgba(208,220,90,.34) 19px,transparent 19px,transparent 28px,rgba(208,220,90,.34) 28px,rgba(208,220,90,.34) 29px,transparent 29px,transparent 38px,rgba(208,220,90,.34) 38px,rgba(208,220,90,.34) 39px,transparent 39px,transparent 50px),repeating-linear-gradient(180deg,transparent 0,transparent 8px,rgba(208,220,90,.34) 8px,rgba(208,220,90,.34) 9px,transparent 9px,transparent 18px,rgba(208,220,90,.34) 18px,rgba(208,220,90,.34) 19px,transparent 19px,transparent 28px,rgba(208,220,90,.34) 28px,rgba(208,220,90,.34) 29px,transparent 29px,transparent 38px,rgba(208,220,90,.34) 38px,rgba(208,220,90,.34) 39px,transparent 39px,transparent 50px)"></div>
<svg style="left:588px;top:446px" width="96" height="54" viewBox="588 446 96 54"><rect x="603.500" y="461.500" width="65" height="23" fill="none" stroke="#3A3A3A" stroke-width="1" stroke-dasharray="4 2.500"/><g fill="#80807A" stroke="#222" stroke-width="1.100" stroke-linejoin="miter"><path d="M636.500 448.300 l4.500 5 h-2.500 v3 h2.500 l-4.500 5 l-4.500-5 h2.500 v-3 h-2.500z"/><path d="M636.500 484.800 l4.500 5 h-2.500 v3 h2.500 l-4.500 5 l-4.500-5 h2.500 v-3 h-2.500z"/><path d="M590.300 473.500 l5-4.500 v2.500 h3 v-2.500 l5 4.500 l-5 4.500 v-2.500 h-3 v2.500z"/><path d="M669.300 473.500 l5-4.500 v2.500 h3 v-2.500 l5 4.500 l-5 4.500 v-2.500 h-3 v2.500z"/><path d="M593 451.500 h6.500 l-2 2 l3 3 l2-2 v6.500 h-6.500 l2-2 l-3-3 l-2 2z"/><path d="M678 451.500 h-6.500 l2 2 l-3 3 l-2-2 v6.500 h6.500 l-2-2 l3-3 l2 2z"/><path d="M593 494 h6.500 l-2-2 l3-3 l2 2 v-6.500 h-6.500 l2 2 l-3 3 l-2-2z"/><path d="M678 494 h-6.500 l2-2 l-3-3 l-2 2 v-6.500 h6.500 l-2 2 l3 3 l2-2z"/></g></svg>
<div class="a" style="left:461px;top:816px;width:958px;height:21px;background:#C8CACC"></div>
<svg style="left:461px;top:816px" width="260" height="21" viewBox="461 816 260 21"><path d="M465 816 H711 V836 H489 Q484 836 481 832 Z" fill="#ECEBE7"/><path d="M568 817 V832 l3 3 M626 817 l6 4 q6 6 8 12 l4 2" stroke="#B8B8B4" fill="none"/></svg>
<div class="a" style="left:490px;top:821px;width:13px;height:13px;border-radius:50%;background:radial-gradient(circle at 45% 40%,#FFF6A0,#FFD21E 45%,#F98A1E 85%);box-shadow:0 0 2px #F9A040"></div>
<div class="t" style="letter-spacing:0.200px;left:508.500px;top:821px">Welcome</div>
<div class="a" style="left:577px;top:821px;width:16px;height:13px;background:linear-gradient(135deg,#fff,#E6EEF6);border:1px solid #8FA6C4;border-top:2px solid #A8BEDC"></div><div class="a" style="left:589px;top:821px;width:3px;height:2px;background:#E8502A"></div>
<div class="t" style="letter-spacing:0.302px;left:597px;top:821px">Tabla</div>
<div class="a" style="left:642px;top:821px;width:16px;height:13px;background:linear-gradient(135deg,#fff,#E6EEF6);border:1px solid #8FA6C4;border-top:2px solid #A8BEDC"></div><div class="a" style="left:654px;top:821px;width:3px;height:2px;background:#E8502A"></div>
<div class="t b" style="letter-spacing:-0.609px;left:662px;top:821px">Add</div>
<svg style="left:694px;top:823px" width="9" height="9" viewBox="0 0 9 9"><path d="M0.500 0.500 L8 8 M8 0.500 L0.500 8" stroke="#111" stroke-width="1.500"/></svg>
<div class="a" style="left:461px;top:837px;width:958px;height:1px;background:#F4F4F2"></div>
<div class="a" style="left:1424px;top:73px;width:14px;height:2px;background:repeating-linear-gradient(90deg,#1C3D94 0,#1C3D94 2px,transparent 2px,transparent 4px)"></div>
<div class="a" style="left:1421px;top:78px;width:22px;height:22px;background:#FBEFD9;border:1px solid #000"></div>
<svg style="left:1427px;top:82px" width="11" height="15" viewBox="0 0 11 15"><path d="M1 0.500 V12 L3.800 9.500 L6 14.500 L8 13.500 L5.800 8.800 H9.500Z" fill="#000"/></svg>
<div class="a" style="left:1422px;top:102px;width:20px;height:1px;background:#B5B3AD"></div>
<div class="a" style="left:1427px;top:111px;width:10px;height:10px;background:#fff;border:1px solid #333"></div>
<div class="a" style="left:1426px;top:132px;width:12px;height:12px;border-radius:50%;background:#fff;border:1px solid #333"></div>
<svg style="left:1426px;top:155px" width="12" height="11" viewBox="0 0 12 11"><path d="M6 1.200 L10.800 9.500 H1.200Z" fill="#fff" stroke="#333" stroke-width="1"/></svg>
<svg style="left:1425px;top:177px" width="15" height="10" viewBox="0 0 15 10"><path d="M0.500 3 H8.500 V0.800 L13.800 4.800 L8.500 8.800 V6.500 H0.500Z" fill="#fff" stroke="#222" stroke-width="1"/></svg>
<svg style="left:1424px;top:197px" width="16" height="15" viewBox="0 0 16 15"><path d="M1 4 q3-3 4 1 q1 8 4 7 q1-1 1-3" fill="none" stroke="#222" stroke-width="1.200"/><path d="M9 9.500 L11.500 3 L15 0.500 L14.500 5Z" fill="#F0B428"/><path d="M9 9.500 l0.800-2 l1.200 1z" fill="#333"/></svg>
<svg style="left:1424px;top:219px" width="16" height="15" viewBox="0 0 16 15"><path d="M5 1 L1 6.500 L5.500 6 L0.500 13.500 L9 9" fill="none" stroke="#222" stroke-width="1.200"/><path d="M8.500 9.500 L11.500 3.500 L15 0.500 L14.500 5.500Z" fill="#5468D8"/><path d="M8.500 9.500 l1-2 l1.200 1z" fill="#E8C040"/></svg>
<div class="a" style="left:1422px;top:239px;width:20px;height:1px;background:#B5B3AD"></div>
<svg style="left:1424px;top:245px" width="16" height="14" viewBox="0 0 16 14"><path d="M2 11.500 Q3 5 5.500 4.500 Q7 9 9 8.500 Q11 4 13.500 2.500" fill="none" stroke="#333" stroke-width="1"/><g fill="#F4F4F4" stroke="#333" stroke-width="0.900"><rect x="0.500" y="10" width="3" height="3"/><rect x="4" y="3" width="3" height="3"/><rect x="7.500" y="7" width="3" height="3"/><rect x="12" y="1" width="3" height="3"/></g></svg>
<div class="a" style="left:1425px;top:268px;width:14px;height:14px;background:linear-gradient(135deg,#3A3A3A,#9A9A9A 55%,#ECEBE7)"></div>
<svg style="left:1424px;top:271px" width="16" height="8" viewBox="0 0 16 8"><path d="M2 4H13" stroke="#222"/><rect x="0.500" y="2.500" width="3" height="3" fill="#EEE" stroke="#222" stroke-width="0.800"/><circle cx="13.500" cy="4" r="1.500" fill="#EEE" stroke="#222" stroke-width="0.800"/></svg>
<svg style="left:1424px;top:290px" width="16" height="15" viewBox="0 0 16 15"><path d="M1 14 L2 11.500 L8.500 5 L10.500 7 L4 13.500Z" fill="#fff" stroke="#111" stroke-width="1"/><path d="M8 3.500 L11.500 7 L15 3 Q15.500 1 13.500 0.500 Q12.500 0 11.500 1Z" fill="#111"/><path d="M11.500 2 l2 0.300" stroke="#2848D0" stroke-width="2"/></svg>
<div class="a" style="left:1269px;top:843px;width:1px;height:21px;background:#B0AEA8"></div><div class="a" style="left:1270px;top:843px;width:1px;height:21px;background:#FBFBFA"></div>
<div class="a" style="left:1298px;top:843px;width:1px;height:21px;background:#B0AEA8"></div><div class="a" style="left:1299px;top:843px;width:1px;height:21px;background:#FBFBFA"></div>
<div class="a" style="left:1340px;top:843px;width:1px;height:21px;background:#B0AEA8"></div><div class="a" style="left:1341px;top:843px;width:1px;height:21px;background:#FBFBFA"></div>
<div class="a" style="left:1422px;top:843px;width:1px;height:21px;background:#B0AEA8"></div><div class="a" style="left:1423px;top:843px;width:1px;height:21px;background:#FBFBFA"></div>
<div class="t" style="letter-spacing:-0.306px;left:1273px;top:848px">(-,-)</div>
<div class="t" style="letter-spacing:0.024px;left:1302px;top:848px">100%</div>
<div class="t" style="letter-spacing:0.120px;left:1343.500px;top:848px">101 / 494 mb</div>
<svg style="left:1427px;top:846px" width="16" height="17" viewBox="0 0 16 17"><path d="M1.500 3 v10 a5 2 0 0 0 10 0 v-10z" fill="#6E9CCC" stroke="#4A6E98" stroke-width="0.800"/><ellipse cx="6.500" cy="3" rx="5" ry="2" fill="#C4D8EC" stroke="#4A6E98" stroke-width="0.800"/><path d="M3 6 v6" stroke="#B8D0E8" stroke-width="1.500"/><circle cx="11" cy="12" r="4" fill="#3CB62E" stroke="#fff" stroke-width="0.800"/><path d="M9 12 l1.500 1.800 l2.500-3.300" stroke="#fff" stroke-width="1.300" fill="none"/></svg>
</div></body></html>
